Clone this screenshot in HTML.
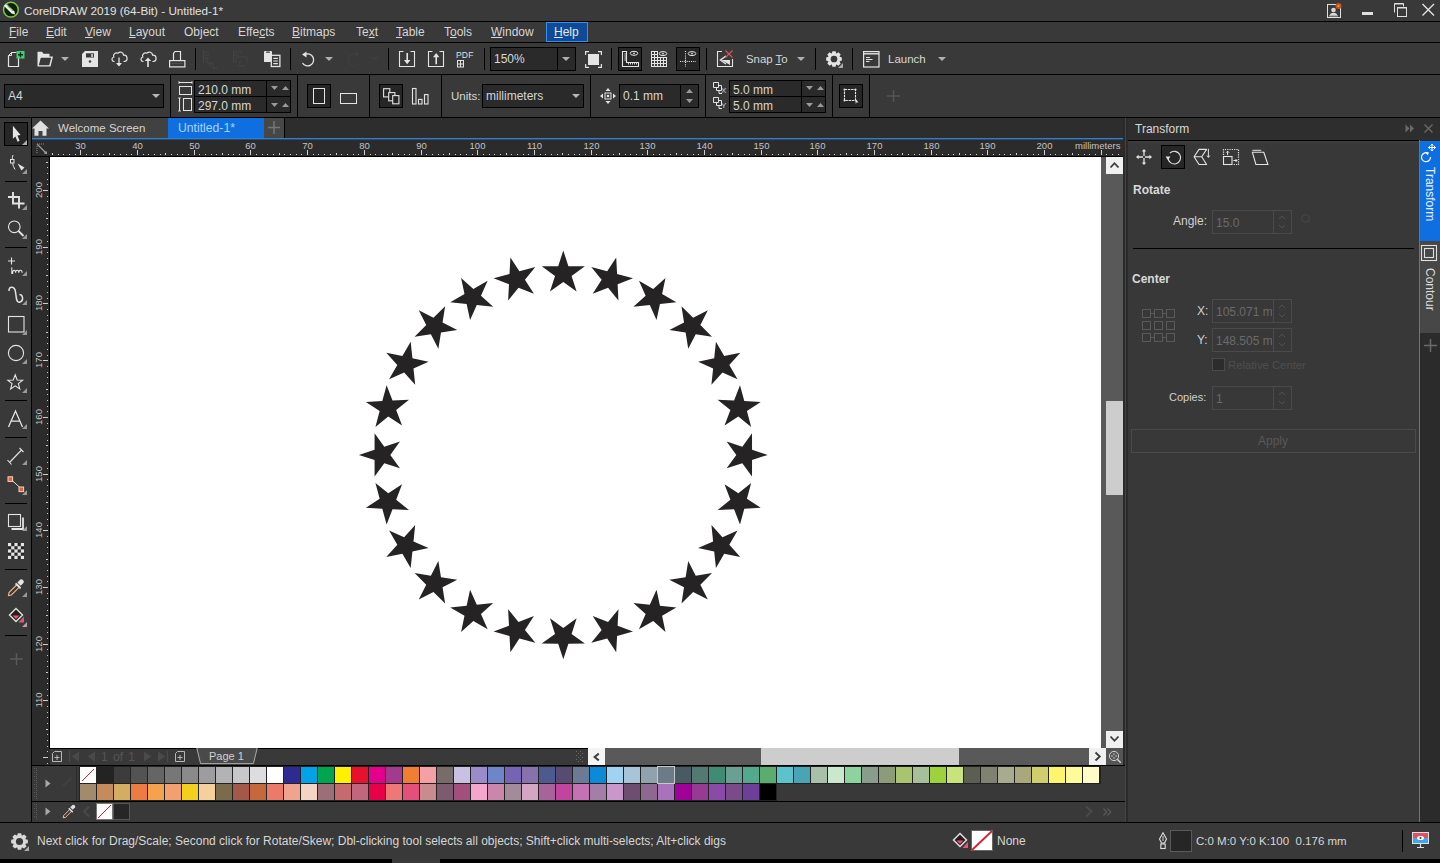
<!DOCTYPE html>
<html><head><meta charset="utf-8">
<style>
*{box-sizing:border-box}
html,body{margin:0;padding:0;width:1440px;height:863px;overflow:hidden;background:#393939;font-family:"Liberation Sans",sans-serif;color:#d6d6d6;font-size:12px}
.a{position:absolute}
.t{position:absolute;white-space:nowrap;line-height:14px}
u{text-decoration:underline;text-underline-offset:1px;text-decoration-thickness:1px}
svg{position:absolute;overflow:visible}
</style></head><body>
<div class="a" style="left:0px;top:0px;width:1440px;height:21px;background:#393939;"></div>
<div class="a" style="left:0px;top:21px;width:1440px;height:1px;background:#000000;"></div>
<svg style="left:2px;top:1px;" width="19" height="19" viewBox="0 0 19 19"><circle cx="8.9" cy="8.7" r="7.4" fill="#0c2406" stroke="#86bf4e" stroke-width="1.5"/>
<path d="M4.2 2.4 L1.8 4.8 L9.6 12.6 L13.2 13.6 L12.2 10.2 Z" fill="#e6f2de"/>
<path d="M4.4 3.6 L10.6 9.8" stroke="#203018" stroke-width="0.9" stroke-dasharray="1 0.9"/></svg>
<div class="t" style="left:24px;top:4px;color:#e2e2e2;font-size:11.7px">CorelDRAW 2019 (64-Bit) - Untitled-1*</div>
<svg style="left:1326px;top:2px;" width="18" height="17" viewBox="0 0 18 17"><rect x="1.5" y="2.5" width="13" height="13" fill="#393939" stroke="#e0e0e0" stroke-width="1"/>
<circle cx="7.5" cy="8" r="2.3" fill="#d8d8d8"/><path d="M3.5 14 Q4 10.8 7.5 10.8 Q11 10.8 11.5 14 Z" fill="#d8d8d8"/>
<rect x="3" y="13.2" width="9" height="1.3" fill="#9aa"/>
<circle cx="12.5" cy="4" r="3" fill="#c4541d"/><circle cx="12.5" cy="4" r="1" fill="#f0a060"/></svg>
<div class="a" style="left:1362px;top:12px;width:11px;height:3px;background:#e0e0e0;"></div>
<svg style="left:1394px;top:3px;" width="14" height="14" viewBox="0 0 14 14"><path d="M0.5 9.5 V0.5 H9.5 V3.5" fill="none" stroke="#e0e0e0" stroke-width="1"/>
<rect x="3.5" y="4.5" width="9" height="9" fill="#393939" stroke="#e0e0e0" stroke-width="1"/>
<path d="M0.5 1 H9.5 M3.5 5 H12.5" stroke="#e0e0e0" stroke-width="1"/></svg>
<svg style="left:1421px;top:3px;" width="15" height="13" viewBox="0 0 15 13"><path d="M1.5 1 L13 12.5 M13 1 L1.5 12.5" stroke="#e4e4e4" stroke-width="1.4"/></svg>
<div class="a" style="left:0px;top:42px;width:1440px;height:1px;background:#000000;"></div>
<div class="a" style="left:546px;top:22px;width:42px;height:20px;background:#0d4a98;border:1px solid #3f8ee6"></div>
<div class="t" style="left:9px;top:25px;"><u>F</u>ile</div>
<div class="t" style="left:46px;top:25px;"><u>E</u>dit</div>
<div class="t" style="left:85px;top:25px;"><u>V</u>iew</div>
<div class="t" style="left:129px;top:25px;"><u>L</u>ayout</div>
<div class="t" style="left:184px;top:25px;">Ob<u>j</u>ect</div>
<div class="t" style="left:238px;top:25px;">Effe<u>c</u>ts</div>
<div class="t" style="left:292px;top:25px;"><u>B</u>itmaps</div>
<div class="t" style="left:356px;top:25px;">Te<u>x</u>t</div>
<div class="t" style="left:396px;top:25px;"><u>T</u>able</div>
<div class="t" style="left:444px;top:25px;">T<u>o</u>ols</div>
<div class="t" style="left:491px;top:25px;"><u>W</u>indow</div>
<div class="t" style="left:554px;top:25px;color:#e8e8e8"><u>H</u>elp</div>
<div class="a" style="left:0px;top:74px;width:1440px;height:1px;background:#000000;"></div>
<svg style="left:8px;top:51px;" width="17" height="17" viewBox="0 0 17 17"><path d="M3.5 1.5 H8.5 M0.5 4.5 V15.5 H10.5 V7" fill="none" stroke="#e4e4e4" stroke-width="1.2"/>
<path d="M0.5 4.5 L3.5 1.5 V4.5 Z" fill="none" stroke="#e4e4e4" stroke-width="1"/>
<rect x="8.5" y="0" width="8" height="7.5" fill="#3dd07a"/>
<path d="M12.5 1.2 V6.3 M10 3.75 H15" stroke="#0a2a10" stroke-width="1.4"/></svg>
<svg style="left:37px;top:51px;" width="17" height="17" viewBox="0 0 17 17"><path d="M0.5 15.5 V0.8 H5 L6.5 2.8 H12.5 V5.5 H16 L13.5 15.5 Z" fill="#e4e4e4"/>
<path d="M3.8 6.8 H14.2 L12.2 14.2 H1.8 Z" fill="#393939"/></svg>
<svg style="left:61px;top:57px;" width="8" height="4" viewBox="0 0 8 4"><path d="M0 0 H8 L4.0 4 Z" fill="#b0b0b0"/></svg>
<svg style="left:82px;top:51px;" width="16" height="16" viewBox="0 0 16 16"><path d="M3 0 H16 V16 H0 V3 Z" fill="#e4e4e4"/>
<rect x="4" y="2.3" width="8" height="4.2" fill="#393939"/><rect x="9.3" y="3" width="1.5" height="3" fill="#e4e4e4"/>
<circle cx="8" cy="10.5" r="1.2" fill="#393939"/></svg>
<svg style="left:111px;top:51px;" width="16" height="16" viewBox="0 0 16 16"><path d="M3.5 10.5 H2.8 A2.3 2.3 0 0 1 2.8 6 A3 3 0 0 1 7 2.2 A3.2 3.2 0 0 1 12.6 4.2 A2.8 2.8 0 0 1 13.2 10.5 H12.5" fill="none" stroke="#e4e4e4" stroke-width="1.2"/>
<path d="M8 6.5 V14" stroke="#e4e4e4" stroke-width="1.3"/><path d="M5 12 L8 15.5 L11 12 Z" fill="#e4e4e4"/></svg>
<svg style="left:140px;top:51px;" width="16" height="16" viewBox="0 0 16 16"><path d="M3.5 10.5 H2.8 A2.3 2.3 0 0 1 2.8 6 A3 3 0 0 1 7 2.2 A3.2 3.2 0 0 1 12.6 4.2 A2.8 2.8 0 0 1 13.2 10.5 H12.5" fill="none" stroke="#e4e4e4" stroke-width="1.2"/>
<path d="M8 8.5 V16" stroke="#e4e4e4" stroke-width="1.6"/><path d="M4.8 10 L8 6.5 L11.2 10 Z" fill="#e4e4e4"/></svg>
<svg style="left:169px;top:51px;" width="17" height="17" viewBox="0 0 17 17"><path d="M4.5 9 V2.5 L6 0.5 H11.5 V9" fill="none" stroke="#e4e4e4" stroke-width="1.2"/>
<rect x="0.6" y="9.6" width="15.3" height="6.3" fill="none" stroke="#e4e4e4" stroke-width="1.2"/>
<path d="M2.5 12.6 H14" stroke="#555" stroke-width="0.8"/></svg>
<div class="a" style="left:195px;top:48px;width:1px;height:22px;background:#000;"></div>
<svg style="left:203px;top:49px;" width="21" height="20" viewBox="0 0 21 20"><path d="M0.5 1 V14 M0.5 3 H6 M0.5 6 H6 M0.5 9 H6 M4 8 V14 H10 V19 M7 14 V18 M9 19 H14" fill="none" stroke="#444" stroke-width="1"/></svg>
<svg style="left:233px;top:49px;" width="20" height="20" viewBox="0 0 20 20"><path d="M0.5 1 V14 M0.5 3 H9 M0.5 6 H6 M3 8 V14 M4 8 H14 V15 M7 11 V15 M5 17 H12" fill="none" stroke="#444" stroke-width="1"/></svg>
<svg style="left:263px;top:50px;" width="18" height="18" viewBox="0 0 18 18"><path d="M1 2 Q1 1 2 1 H8 Q9 1 9 2 V12 H1 Z" fill="#e4e4e4"/>
<rect x="3" y="1.5" width="4" height="1.3" rx="0.6" fill="#393939"/>
<rect x="8.3" y="5.3" width="8.6" height="11.2" fill="#393939" stroke="#e4e4e4" stroke-width="1.3"/>
<path d="M10.3 8.4 H14.9 M10.3 11 H14.9 M10.3 13.6 H14.9" stroke="#e4e4e4" stroke-width="1.2"/></svg>
<div class="a" style="left:290px;top:48px;width:1px;height:22px;background:#000;"></div>
<svg style="left:300px;top:51px;" width="17" height="17" viewBox="0 0 17 17"><path d="M5 3.5 A6 6 0 1 1 2.5 12" fill="none" stroke="#e4e4e4" stroke-width="1.3" stroke-dasharray="30 1.5 3 1.5 2"/>
<path d="M2 3.5 L6.5 0.5 V6.5 Z" fill="#e4e4e4"/></svg>
<svg style="left:325px;top:57px;" width="8" height="4" viewBox="0 0 8 4"><path d="M0 0 H8 L4.0 4 Z" fill="#b0b0b0"/></svg>
<svg style="left:345px;top:51px;" width="17" height="17" viewBox="0 0 17 17"><path d="M12 3.5 A6 6 0 1 0 14.5 12" fill="none" stroke="#3e3e3e" stroke-width="1.3"/>
<path d="M15 3.5 L10.5 0.5 V6.5 Z" fill="#3e3e3e"/></svg>
<svg style="left:370px;top:57px;" width="9" height="4" viewBox="0 0 9 4"><path d="M0 0 H9 L4.5 4 Z" fill="#3e3e3e"/></svg>
<div class="a" style="left:388px;top:48px;width:1px;height:22px;background:#000;"></div>
<svg style="left:398px;top:50px;" width="18" height="18" viewBox="0 0 18 18"><path d="M5.5 1.5 H1.5 V16.5 H16.5 V1.5 H12.5" fill="none" stroke="#e4e4e4" stroke-width="1.1"/>
<path d="M9.2 3 V11" stroke="#e4e4e4" stroke-width="1.6"/><path d="M6 10 H12.4 L9.2 14.3 Z" fill="#e4e4e4"/></svg>
<svg style="left:427px;top:50px;" width="18" height="18" viewBox="0 0 18 18"><path d="M5.5 1.5 H1.5 V16.5 H16.5 V1.5 H12.5" fill="none" stroke="#e4e4e4" stroke-width="1.1"/>
<path d="M9.2 6 V14.3" stroke="#e4e4e4" stroke-width="1.6"/><path d="M6 7.2 H12.4 L9.2 3 Z" fill="#e4e4e4"/></svg>
<div class="t" style="left:456px;top:51px;font-size:8.5px;line-height:8px;color:#e0e0e0;letter-spacing:0.2px">PDF</div>
<svg style="left:456px;top:60px;" width="9" height="8" viewBox="0 0 9 8"><rect x="1.5" y="0.5" width="6" height="6.5" fill="none" stroke="#e4e4e4" stroke-width="1"/>
<path d="M4.5 0.5 V7 M1.5 4 H7.5" stroke="#e4e4e4" stroke-width="1"/></svg>
<div class="a" style="left:484px;top:48px;width:1px;height:22px;background:#000;"></div>
<div class="a" style="left:490px;top:47px;width:86px;height:24px;background:#2a2a2a;border:1px solid #000"></div>
<div class="a" style="left:557px;top:48px;width:1px;height:22px;background:#000;"></div>
<div class="t" style="left:494px;top:52px;color:#d8d8d8">150%</div>
<svg style="left:562px;top:57px;" width="8" height="4" viewBox="0 0 8 4"><path d="M0 0 H8 L4.0 4 Z" fill="#b0b0b0"/></svg>
<svg style="left:585px;top:51px;" width="17" height="17" viewBox="0 0 17 17"><path d="M0.6 4 V0.6 H4 M13 0.6 H16.4 V4 M16.4 13 V16.4 H13 M4 16.4 H0.6 V13" fill="none" stroke="#e4e4e4" stroke-width="1.2"/>
<rect x="3" y="3" width="11" height="11" fill="#e4e4e4"/></svg>
<div class="a" style="left:611px;top:48px;width:1px;height:22px;background:#000;"></div>
<div class="a" style="left:618px;top:47px;width:24px;height:24px;background:#262626;border:1px solid #000"></div>
<svg style="left:622px;top:50px;" width="17" height="18" viewBox="0 0 17 18"><path d="M0.5 1.5 H4.5 V12.5 H16.5 V16.5 H0.5 Z" fill="none" stroke="#e4e4e4" stroke-width="1.1"/>
<path d="M2.3 4 H4.5 M2.3 6 H4.5 M2.3 8 H4.5 M2.3 10 H4.5 M6.5 12.5 V14.5 M8.5 12.5 V14.5 M10.5 12.5 V14.5 M12.5 12.5 V14.5 M14.5 12.5 V14.5" stroke="#e4e4e4" stroke-width="0.9"/>
<ellipse cx="12" cy="3.3" rx="3.8" ry="2" fill="none" stroke="#e4e4e4" stroke-width="1"/><circle cx="12" cy="3.3" r="0.9" fill="#e4e4e4"/></svg>
<svg style="left:651px;top:51px;" width="17" height="17" viewBox="0 0 17 17"><rect x="0" y="0" width="7" height="7" fill="#e4e4e4"/><rect x="0" y="6" width="16" height="10" fill="#e4e4e4"/><rect x="1" y="1" width="2" height="2" fill="#393939"/><rect x="4" y="1" width="2" height="2" fill="#393939"/><rect x="1" y="4" width="2" height="2" fill="#393939"/><rect x="4" y="4" width="2" height="2" fill="#393939"/><rect x="1" y="7" width="2" height="2" fill="#393939"/><rect x="4" y="7" width="2" height="2" fill="#393939"/><rect x="7" y="7" width="2" height="2" fill="#393939"/><rect x="10" y="7" width="2" height="2" fill="#393939"/><rect x="13" y="7" width="2" height="2" fill="#393939"/><rect x="1" y="10" width="2" height="2" fill="#393939"/><rect x="4" y="10" width="2" height="2" fill="#393939"/><rect x="7" y="10" width="2" height="2" fill="#393939"/><rect x="10" y="10" width="2" height="2" fill="#393939"/><rect x="13" y="10" width="2" height="2" fill="#393939"/><rect x="1" y="13" width="2" height="2" fill="#393939"/><rect x="4" y="13" width="2" height="2" fill="#393939"/><rect x="7" y="13" width="2" height="2" fill="#393939"/><rect x="10" y="13" width="2" height="2" fill="#393939"/><rect x="13" y="13" width="2" height="2" fill="#393939"/>
<ellipse cx="12" cy="2.6" rx="3.8" ry="2" fill="#393939" stroke="#e4e4e4" stroke-width="1"/><circle cx="12" cy="2.6" r="0.9" fill="#e4e4e4"/></svg>
<div class="a" style="left:676px;top:47px;width:24px;height:24px;background:#262626;border:1px solid #000"></div>
<svg style="left:679px;top:50px;" width="18" height="18" viewBox="0 0 18 18"><path d="M6.5 1 V17 M1 11.5 H17" fill="none" stroke="#e4e4e4" stroke-width="1.1" stroke-dasharray="1.1 1.1"/>
<ellipse cx="13" cy="3.6" rx="3.8" ry="2" fill="none" stroke="#e4e4e4" stroke-width="1"/><circle cx="13" cy="3.6" r="0.9" fill="#e4e4e4"/></svg>
<div class="a" style="left:706px;top:48px;width:1px;height:22px;background:#000;"></div>
<svg style="left:716px;top:49px;" width="19" height="19" viewBox="0 0 19 19"><path d="M6 2.5 H1.5 V17.5 H16.5 V10" fill="none" stroke="#e4e4e4" stroke-width="1.1"/>
<path d="M10 7 L4.5 11 L10 15" fill="none" stroke="#e4e4e4" stroke-width="1.5"/><path d="M5.5 11 H14 V16 Z" fill="#e4e4e4"/>
<path d="M9.5 1.5 L16.5 8.5 M16.5 1.5 L9.5 8.5" stroke="#d25462" stroke-width="1.2"/></svg>
<div class="t" style="left:746px;top:52px;color:#d8d8d8;font-size:11.4px">Snap <u>T</u>o</div>
<svg style="left:797px;top:57px;" width="8" height="4" viewBox="0 0 8 4"><path d="M0 0 H8 L4.0 4 Z" fill="#b0b0b0"/></svg>
<div class="a" style="left:815px;top:48px;width:1px;height:22px;background:#000;"></div>
<svg style="left:826px;top:51px;" width="16" height="16" viewBox="0 0 16 16"><path d="M15.84 6.41 L15.84 9.59 L13.69 10.14 L13.54 10.51 L14.67 12.42 L12.42 14.67 L10.51 13.54 L10.14 13.69 L9.59 15.84 L6.41 15.84 L5.86 13.69 L5.49 13.54 L3.58 14.67 L1.33 12.42 L2.46 10.51 L2.31 10.14 L0.16 9.59 L0.16 6.41 L2.31 5.86 L2.46 5.49 L1.33 3.58 L3.58 1.33 L5.49 2.46 L5.86 2.31 L6.41 0.16 L9.59 0.16 L10.14 2.31 L10.51 2.46 L12.42 1.33 L14.67 3.58 L13.54 5.49 L13.69 5.86 Z" fill="#e4e4e4"/><circle cx="8.0" cy="8.0" r="3.36" fill="#393939"/></svg>
<svg style="left:838px;top:63px;" width="5" height="5" viewBox="0 0 5 5"><path d="M5 0 V5 H0 Z" fill="#aaa"/></svg>
<div class="a" style="left:852px;top:48px;width:1px;height:22px;background:#000;"></div>
<svg style="left:863px;top:51px;" width="17" height="17" viewBox="0 0 17 17"><rect x="0.6" y="0.6" width="15.4" height="15.4" fill="none" stroke="#e4e4e4" stroke-width="1.2"/>
<path d="M0.6 2.8 H16" stroke="#e4e4e4" stroke-width="1.4"/>
<path d="M3 6.5 H7 M3 8.5 H9.5 M3 10.5 H6.5" stroke="#e4e4e4" stroke-width="1"/></svg>
<div class="t" style="left:888px;top:52px;color:#d8d8d8;font-size:11.5px">Launch</div>
<svg style="left:938px;top:57px;" width="8" height="4" viewBox="0 0 8 4"><path d="M0 0 H8 L4.0 4 Z" fill="#b0b0b0"/></svg>
<div class="a" style="left:0px;top:117px;width:1440px;height:1px;background:#000000;"></div>
<div class="a" style="left:4px;top:84px;width:160px;height:24px;background:#2a2a2a;border:1px solid #000"></div>
<div class="t" style="left:8px;top:89px;">A4</div>
<svg style="left:152px;top:94px;" width="8" height="4" viewBox="0 0 8 4"><path d="M0 0 H8 L4.0 4 Z" fill="#b8b8b8"/></svg>
<div class="a" style="left:170px;top:75px;width:1px;height:42px;background:#000;"></div>
<svg style="left:178px;top:81px;" width="15" height="31" viewBox="0 0 15 31"><path d="M1 1.5 H14" stroke="#e4e4e4" stroke-width="1"/><path d="M1 0 V3 M14 0 V3" stroke="#e4e4e4" stroke-width="0.8"/>
<rect x="1.5" y="5.5" width="12" height="8" fill="none" stroke="#e4e4e4" stroke-width="1"/>
<path d="M1.5 17 V30" stroke="#e4e4e4" stroke-width="1"/><path d="M0 17 H3 M0 30 H3" stroke="#e4e4e4" stroke-width="0.8"/>
<rect x="5.5" y="17.5" width="8" height="12" fill="none" stroke="#e4e4e4" stroke-width="1"/></svg>
<div class="a" style="left:194px;top:80px;width:97px;height:33px;background:#2a2a2a;border:1px solid #000"></div>
<div class="a" style="left:194px;top:96px;width:97px;height:1px;background:#000;"></div>
<div class="a" style="left:266px;top:80px;width:1px;height:33px;background:#000;"></div>
<div class="t" style="left:198px;top:83px;">210.0 mm</div>
<div class="t" style="left:198px;top:99px;">297.0 mm</div>
<svg style="left:271px;top:86px;" width="7" height="4" viewBox="0 0 7 4"><path d="M0 0 H7 L3.5 4 Z" fill="#9a9a9a"/></svg>
<svg style="left:282px;top:86px;" width="7" height="4" viewBox="0 0 7 4"><path d="M0 4 H7 L3.5 0 Z" fill="#9a9a9a"/></svg>
<svg style="left:271px;top:103px;" width="7" height="4" viewBox="0 0 7 4"><path d="M0 0 H7 L3.5 4 Z" fill="#9a9a9a"/></svg>
<svg style="left:282px;top:103px;" width="7" height="4" viewBox="0 0 7 4"><path d="M0 4 H7 L3.5 0 Z" fill="#9a9a9a"/></svg>
<div class="a" style="left:297px;top:75px;width:1px;height:42px;background:#000;"></div>
<div class="a" style="left:307px;top:84px;width:24px;height:24px;background:#262626;border:1px solid #000"></div>
<svg style="left:313px;top:88px;" width="12" height="16" viewBox="0 0 12 16"><rect x="0.5" y="0.5" width="11" height="15" fill="none" stroke="#e4e4e4" stroke-width="1"/></svg>
<svg style="left:340px;top:93px;" width="17" height="11" viewBox="0 0 17 11"><rect x="0.5" y="0.5" width="16" height="10" fill="none" stroke="#e4e4e4" stroke-width="1"/></svg>
<div class="a" style="left:369px;top:75px;width:1px;height:42px;background:#000;"></div>
<div class="a" style="left:379px;top:84px;width:24px;height:24px;background:#262626;border:1px solid #000"></div>
<svg style="left:382px;top:87px;" width="18" height="18" viewBox="0 0 18 18"><rect x="1.6" y="1.7" width="6.2" height="8.2" fill="#262626" stroke="#e4e4e4" stroke-width="1.1"/>
<rect x="6.7" y="5.6" width="6.2" height="8.2" fill="#262626" stroke="#e4e4e4" stroke-width="1.1"/>
<rect x="10.7" y="8.6" width="6.2" height="8.2" fill="#262626" stroke="#e4e4e4" stroke-width="1.1"/></svg>
<svg style="left:411px;top:87px;" width="18" height="18" viewBox="0 0 18 18"><rect x="1.5" y="1.5" width="3.5" height="15.5" fill="none" stroke="#e4e4e4" stroke-width="1.1"/>
<rect x="7.5" y="12.4" width="3.5" height="4.6" fill="none" stroke="#e4e4e4" stroke-width="1.1"/>
<rect x="13.5" y="7.6" width="3.5" height="9.4" fill="none" stroke="#e4e4e4" stroke-width="1.1"/></svg>
<div class="a" style="left:441px;top:75px;width:1px;height:42px;background:#000;"></div>
<div class="t" style="left:451px;top:89px;font-size:11.5px">Units:</div>
<div class="a" style="left:482px;top:84px;width:102px;height:24px;background:#2a2a2a;border:1px solid #000"></div>
<div class="t" style="left:486px;top:89px;">millimeters</div>
<svg style="left:572px;top:94px;" width="8" height="4" viewBox="0 0 8 4"><path d="M0 0 H8 L4.0 4 Z" fill="#b8b8b8"/></svg>
<div class="a" style="left:590px;top:75px;width:1px;height:42px;background:#000;"></div>
<svg style="left:600px;top:88px;" width="16" height="16" viewBox="0 0 16 16"><path d="M8 0 L10.5 3 H5.5 Z M8 16 L10.5 13 H5.5 Z M0 8 L3 5.5 V10.5 Z M16 8 L13 5.5 V10.5 Z" fill="#e4e4e4"/>
<rect x="5" y="5" width="6" height="6" fill="none" stroke="#e4e4e4" stroke-width="1"/><rect x="6.8" y="6.8" width="2.4" height="2.4" fill="#e4e4e4"/></svg>
<div class="a" style="left:619px;top:84px;width:80px;height:24px;background:#2a2a2a;border:1px solid #000"></div>
<div class="a" style="left:680px;top:85px;width:1px;height:22px;background:#000;"></div>
<div class="t" style="left:623px;top:89px;">0.1 mm</div>
<svg style="left:686px;top:89px;" width="7" height="4" viewBox="0 0 7 4"><path d="M0 4 H7 L3.5 0 Z" fill="#9a9a9a"/></svg>
<svg style="left:686px;top:99px;" width="7" height="4" viewBox="0 0 7 4"><path d="M0 0 H7 L3.5 4 Z" fill="#9a9a9a"/></svg>
<div class="a" style="left:705px;top:75px;width:1px;height:42px;background:#000;"></div>
<svg style="left:713px;top:82px;" width="16" height="15" viewBox="0 0 16 15"><path d="M0.5 0.5 H5.5 V5.5 H0.5 Z M5.5 3.5 H8.5 V8.5 H3.5 V5.5 M6 8.5 V11.5 H9" fill="none" stroke="#e4e4e4" stroke-width="1"/></svg>
<div class="t" style="left:721px;top:86px;font-size:8px;line-height:10px;color:#d0d0d0">X</div>
<svg style="left:713px;top:97px;" width="16" height="15" viewBox="0 0 16 15"><path d="M0.5 0.5 H5.5 V5.5 H0.5 Z M5.5 3.5 H8.5 V8.5 H3.5 V5.5 M6 8.5 V11.5 H9" fill="none" stroke="#e4e4e4" stroke-width="1"/></svg>
<div class="t" style="left:721px;top:101px;font-size:8px;line-height:10px;color:#d0d0d0">Y</div>
<div class="a" style="left:729px;top:80px;width:97px;height:33px;background:#2a2a2a;border:1px solid #000"></div>
<div class="a" style="left:729px;top:96px;width:97px;height:1px;background:#000;"></div>
<div class="a" style="left:801px;top:80px;width:1px;height:33px;background:#000;"></div>
<div class="t" style="left:733px;top:83px;">5.0 mm</div>
<div class="t" style="left:733px;top:99px;">5.0 mm</div>
<svg style="left:806px;top:86px;" width="7" height="4" viewBox="0 0 7 4"><path d="M0 0 H7 L3.5 4 Z" fill="#9a9a9a"/></svg>
<svg style="left:817px;top:86px;" width="7" height="4" viewBox="0 0 7 4"><path d="M0 4 H7 L3.5 0 Z" fill="#9a9a9a"/></svg>
<svg style="left:806px;top:103px;" width="7" height="4" viewBox="0 0 7 4"><path d="M0 0 H7 L3.5 4 Z" fill="#9a9a9a"/></svg>
<svg style="left:817px;top:103px;" width="7" height="4" viewBox="0 0 7 4"><path d="M0 4 H7 L3.5 0 Z" fill="#9a9a9a"/></svg>
<div class="a" style="left:832px;top:75px;width:1px;height:42px;background:#000;"></div>
<div class="a" style="left:839px;top:84px;width:24px;height:24px;background:#262626;border:1px solid #000"></div>
<svg style="left:843px;top:88px;" width="17" height="17" viewBox="0 0 17 17"><path d="M1.5 1.5 H12.5 V12.5 H1.5 Z" fill="none" stroke="#e4e4e4" stroke-width="1.1" stroke-dasharray="2.5 0.8"/>
<circle cx="1.5" cy="1.5" r="1" fill="#e4e4e4"/><circle cx="12.5" cy="1.5" r="1" fill="#e4e4e4"/><circle cx="1.5" cy="12.5" r="1" fill="#e4e4e4"/>
<path d="M12 10 L15.5 14.5 L13.6 14.2 L12.8 16 Z" fill="#e4e4e4"/></svg>
<div class="a" style="left:869px;top:75px;width:1px;height:42px;background:#000;"></div>
<svg style="left:887px;top:90px;" width="13" height="12" viewBox="0 0 13 12"><path d="M6.5 0 V12 M0 6 H13" stroke="#555" stroke-width="1.6"/></svg>
<div class="a" style="left:31px;top:118px;width:1px;height:704px;background:#000;"></div>
<div class="a" style="left:4px;top:122px;width:24px;height:24px;background:#262626;border:1px solid #000"></div>
<svg style="left:11px;top:124px;" width="12" height="19" viewBox="0 0 12 19"><path d="M1.9 1.7 L9.6 11 L6.4 11.4 L8.6 16.8 L6.6 17.8 L4.4 12.6 L1.9 14.8 Z" fill="#e4e4e4"/></svg>
<svg style="left:22px;top:140px;" width="5" height="5" viewBox="0 0 5 5"><path d="M5 0 V5 H0 Z" fill="#b0b0b0"/></svg>
<svg style="left:8px;top:154px;" width="20" height="20" viewBox="0 0 20 20"><path d="M5 1 Q4 4 4.2 6.3 M4.5 8.8 Q5 12.5 7 15.5" fill="none" stroke="#e4e4e4" stroke-width="1"/>
<rect x="2.5" y="5.5" width="3.5" height="3.5" fill="#393939" stroke="#e4e4e4" stroke-width="1"/>
<path d="M9.5 9.5 L16.5 13.5 L13.5 16.5 Z" fill="#e4e4e4"/></svg>
<svg style="left:22px;top:169px;" width="5" height="5" viewBox="0 0 5 5"><path d="M5 0 V5 H0 Z" fill="#9a9a9a"/></svg>
<div class="a" style="left:5px;top:181px;width:22px;height:1px;background:#000;"></div>
<svg style="left:7px;top:191px;" width="18" height="18" viewBox="0 0 18 18"><path d="M6 1 V12.5 H17.5 M1 6 H12 V17.5" fill="none" stroke="#e4e4e4" stroke-width="1.9"/></svg>
<svg style="left:22px;top:205px;" width="5" height="5" viewBox="0 0 5 5"><path d="M5 0 V5 H0 Z" fill="#9a9a9a"/></svg>
<svg style="left:7px;top:220px;" width="18" height="18" viewBox="0 0 18 18"><circle cx="7.3" cy="6.8" r="5.8" fill="none" stroke="#e4e4e4" stroke-width="1.1"/>
<path d="M11.5 11 L16.5 16" stroke="#e4e4e4" stroke-width="1.8"/></svg>
<svg style="left:22px;top:234px;" width="5" height="5" viewBox="0 0 5 5"><path d="M5 0 V5 H0 Z" fill="#9a9a9a"/></svg>
<div class="a" style="left:5px;top:247px;width:22px;height:1px;background:#000;"></div>
<svg style="left:7px;top:257px;" width="20" height="19" viewBox="0 0 20 19"><path d="M4.5 0.5 V7.5 M1 4 H8" stroke="#e4e4e4" stroke-width="1.1"/>
<path d="M4.8 10.2 V16.5 H5.6 C5.6 12.4 8.6 12.4 8.6 15.8 C8.6 12.4 11.8 12.4 11.8 15.8 C11.8 12.4 15 12.4 15.2 15.8" fill="none" stroke="#e4e4e4" stroke-width="1.05"/></svg>
<svg style="left:22px;top:271px;" width="5" height="5" viewBox="0 0 5 5"><path d="M5 0 V5 H0 Z" fill="#9a9a9a"/></svg>
<svg style="left:7px;top:286px;" width="18" height="19" viewBox="0 0 18 19"><path d="M2 5 Q2 1 5 1.3 Q8 1.7 8.5 6 Q9.2 11 9.5 13 Q10.5 17 13 16 Q16 15 15.5 11.5 Q15 8.5 12.5 8.5" fill="none" stroke="#e4e4e4" stroke-width="1.5"/></svg>
<svg style="left:22px;top:300px;" width="5" height="5" viewBox="0 0 5 5"><path d="M5 0 V5 H0 Z" fill="#9a9a9a"/></svg>
<svg style="left:7px;top:315px;" width="18" height="18" viewBox="0 0 18 18"><rect x="1.5" y="1.5" width="15.5" height="15.5" fill="none" stroke="#e4e4e4" stroke-width="1.1"/></svg>
<svg style="left:22px;top:330px;" width="5" height="5" viewBox="0 0 5 5"><path d="M5 0 V5 H0 Z" fill="#9a9a9a"/></svg>
<svg style="left:7px;top:344px;" width="18" height="18" viewBox="0 0 18 18"><circle cx="9" cy="9" r="7.6" fill="none" stroke="#e4e4e4" stroke-width="1.1"/></svg>
<svg style="left:22px;top:359px;" width="5" height="5" viewBox="0 0 5 5"><path d="M5 0 V5 H0 Z" fill="#9a9a9a"/></svg>
<svg style="left:7px;top:374px;" width="18" height="18" viewBox="0 0 18 18"><polygon points="8.20,0.80 10.14,5.93 15.62,6.19 11.34,9.62 12.78,14.91 8.20,11.90 3.62,14.91 5.06,9.62 0.78,6.19 6.26,5.93" fill="none" stroke="#e4e4e4" stroke-width="1.1"/></svg>
<svg style="left:22px;top:388px;" width="5" height="5" viewBox="0 0 5 5"><path d="M5 0 V5 H0 Z" fill="#9a9a9a"/></svg>
<div class="a" style="left:5px;top:400px;width:22px;height:1px;background:#000;"></div>
<svg style="left:7px;top:410px;" width="18" height="18" viewBox="0 0 18 18"><path d="M1.5 17 L8.5 1 L15.5 17 M4.3 11.2 H12.7" fill="none" stroke="#e4e4e4" stroke-width="1.3"/></svg>
<svg style="left:22px;top:424px;" width="5" height="5" viewBox="0 0 5 5"><path d="M5 0 V5 H0 Z" fill="#9a9a9a"/></svg>
<div class="a" style="left:5px;top:437px;width:22px;height:1px;background:#000;"></div>
<svg style="left:7px;top:447px;" width="18" height="18" viewBox="0 0 18 18"><path d="M2.5 15.5 L14.5 3 M0.5 13 L4.5 17.5 M12.5 1 L16.5 5" fill="none" stroke="#e4e4e4" stroke-width="1.1"/></svg>
<svg style="left:22px;top:460px;" width="5" height="5" viewBox="0 0 5 5"><path d="M5 0 V5 H0 Z" fill="#9a9a9a"/></svg>
<svg style="left:7px;top:475px;" width="18" height="18" viewBox="0 0 18 18"><path d="M3.5 4 L14.5 14" stroke="#e4e4e4" stroke-width="1"/>
<rect x="1" y="1.8" width="4.6" height="4.6" fill="#e0643e" stroke="#f4d0c0" stroke-width="1"/>
<rect x="12" y="12" width="4.6" height="4.6" fill="#e0643e" stroke="#f4d0c0" stroke-width="1"/></svg>
<svg style="left:22px;top:490px;" width="5" height="5" viewBox="0 0 5 5"><path d="M5 0 V5 H0 Z" fill="#9a9a9a"/></svg>
<div class="a" style="left:5px;top:503px;width:22px;height:1px;background:#000;"></div>
<svg style="left:7px;top:513px;" width="18" height="18" viewBox="0 0 18 18"><rect x="1.5" y="1.5" width="12" height="12" fill="none" stroke="#e4e4e4" stroke-width="1.1"/>
<path d="M4.5 16 H16 V4.5" fill="none" stroke="#e4e4e4" stroke-width="1.8"/></svg>
<svg style="left:22px;top:526px;" width="5" height="5" viewBox="0 0 5 5"><path d="M5 0 V5 H0 Z" fill="#9a9a9a"/></svg>
<svg style="left:7px;top:542px;" width="18" height="18" viewBox="0 0 18 18"><rect x="1" y="1" width="16" height="16" fill="#e4e4e4"/><rect x="1.0" y="4.2" width="3.2" height="3.2" fill="#262626"/><rect x="1.0" y="10.6" width="3.2" height="3.2" fill="#262626"/><rect x="4.2" y="1.0" width="3.2" height="3.2" fill="#262626"/><rect x="4.2" y="7.4" width="3.2" height="3.2" fill="#262626"/><rect x="4.2" y="13.8" width="3.2" height="3.2" fill="#262626"/><rect x="7.4" y="4.2" width="3.2" height="3.2" fill="#262626"/><rect x="7.4" y="10.6" width="3.2" height="3.2" fill="#262626"/><rect x="10.6" y="1.0" width="3.2" height="3.2" fill="#262626"/><rect x="10.6" y="7.4" width="3.2" height="3.2" fill="#262626"/><rect x="10.6" y="13.8" width="3.2" height="3.2" fill="#262626"/><rect x="13.8" y="4.2" width="3.2" height="3.2" fill="#262626"/><rect x="13.8" y="10.6" width="3.2" height="3.2" fill="#262626"/></svg>
<div class="a" style="left:5px;top:569px;width:22px;height:1px;background:#000;"></div>
<svg style="left:7px;top:579px;" width="18" height="18" viewBox="0 0 18 18"><path d="M1.5 16.5 L2 13.6 L10.2 5.4 L12.6 7.8 L4.4 16 Z" fill="#393939" stroke="#f0b898" stroke-width="1.1"/>
<path d="M10.4 3.4 L13.3 0.5 Q14.6 -0.3 16 1.1 Q17.4 2.5 16.6 3.8 L13.7 6.7 Z" fill="#e4e4e4"/><path d="M8.6 4.4 L13.6 9.4" stroke="#e4e4e4" stroke-width="1.8"/></svg>
<svg style="left:22px;top:592px;" width="5" height="5" viewBox="0 0 5 5"><path d="M5 0 V5 H0 Z" fill="#9a9a9a"/></svg>
<svg style="left:7px;top:607px;" width="18" height="18" viewBox="0 0 18 18"><path d="M9 1.5 L15.5 8 L9 14.5 L2.5 8 Z" fill="#2a1a1e" stroke="#d8e8d8" stroke-width="1.4"/>
<path d="M5.5 8.5 H12.5 L9 12 Z" fill="#e8557a"/>
<path d="M17 9.5 V15.5 H11.5 Z" fill="#e8557a"/></svg>
<svg style="left:22px;top:622px;" width="5" height="5" viewBox="0 0 5 5"><path d="M5 0 V5 H0 Z" fill="#c0a0a8"/></svg>
<div class="a" style="left:5px;top:635px;width:22px;height:1px;background:#000;"></div>
<svg style="left:10px;top:653px;" width="13" height="12" viewBox="0 0 13 12"><path d="M6.5 0 V12 M0 6 H13" stroke="#5a5a5a" stroke-width="1.4"/></svg>
<div class="a" style="left:32px;top:118px;width:1093px;height:20px;background:#2d2d2d;"></div>
<div class="a" style="left:32px;top:118px;width:136px;height:20px;background:#414141;"></div>
<svg style="left:32px;top:120px;" width="18" height="16" viewBox="0 0 18 16"><path d="M8.5 0.5 L17 8.5 H14.5 V15.8 H10.5 V11 H6.5 V15.8 H2.5 V8.5 H0 Z" fill="#e0e0e0"/></svg>
<div class="t" style="left:58px;top:121px;font-size:11.5px;color:#d4d4d4">Welcome Screen</div>
<div class="a" style="left:168px;top:118px;width:96px;height:20px;background:#0f6fe0;"></div>
<div class="t" style="left:178px;top:121px;font-size:12.2px;color:#a9d2ff">Untitled-1*</div>
<div class="a" style="left:264px;top:118px;width:20px;height:20px;background:#474747;"></div>
<svg style="left:268px;top:121px;" width="12" height="13" viewBox="0 0 12 13"><path d="M6 0 V13 M0 6.5 H12" stroke="#767676" stroke-width="1.5"/></svg>
<div class="a" style="left:284px;top:118px;width:1px;height:20px;background:#000;"></div>
<div class="a" style="left:32px;top:138px;width:1092px;height:1px;background:#3a7bc2;"></div>
<div class="a" style="left:32px;top:139px;width:1092px;height:1px;background:#1f4e80;"></div>
<div class="a" style="left:32px;top:140px;width:1092px;height:16px;background:#2b2b2b;"></div>
<div class="a" style="left:32px;top:156px;width:1092px;height:1px;background:#000;"></div>
<div class="a" style="left:32px;top:157px;width:18px;height:608px;background:#2b2b2b;"></div>
<div class="a" style="left:49px;top:157px;width:1px;height:592px;background:#000;"></div>
<svg style="left:36px;top:143px;" width="12" height="12" viewBox="0 0 12 12"><path d="M1 1 L10 10" stroke="#9a9a9a" stroke-width="1.2"/><path d="M1 3 V11 M1 1 H9" stroke="#8a8a8a" stroke-width="1" stroke-dasharray="1 1"/>
<rect x="8.5" y="8.5" width="2.5" height="2.5" fill="#9a9a9a"/></svg>
<svg style="left:0;top:0" width="1440" height="863"><g fill="#cfcfcf"><rect x="52" y="153" width="1" height="2"/><rect x="58" y="154" width="1" height="1"/><rect x="63" y="154" width="1" height="1"/><rect x="69" y="154" width="1" height="1"/><rect x="75" y="154" width="1" height="1"/><rect x="80" y="150" width="1" height="5"/><rect x="86" y="154" width="1" height="1"/><rect x="92" y="154" width="1" height="1"/><rect x="97" y="154" width="1" height="1"/><rect x="103" y="154" width="1" height="1"/><rect x="109" y="153" width="1" height="2"/><rect x="114" y="154" width="1" height="1"/><rect x="120" y="154" width="1" height="1"/><rect x="126" y="154" width="1" height="1"/><rect x="131" y="154" width="1" height="1"/><rect x="137" y="150" width="1" height="5"/><rect x="143" y="154" width="1" height="1"/><rect x="148" y="154" width="1" height="1"/><rect x="154" y="154" width="1" height="1"/><rect x="160" y="154" width="1" height="1"/><rect x="165" y="153" width="1" height="2"/><rect x="171" y="154" width="1" height="1"/><rect x="177" y="154" width="1" height="1"/><rect x="182" y="154" width="1" height="1"/><rect x="188" y="154" width="1" height="1"/><rect x="194" y="150" width="1" height="5"/><rect x="199" y="154" width="1" height="1"/><rect x="205" y="154" width="1" height="1"/><rect x="211" y="154" width="1" height="1"/><rect x="216" y="154" width="1" height="1"/><rect x="222" y="153" width="1" height="2"/><rect x="228" y="154" width="1" height="1"/><rect x="233" y="154" width="1" height="1"/><rect x="239" y="154" width="1" height="1"/><rect x="245" y="154" width="1" height="1"/><rect x="250" y="150" width="1" height="5"/><rect x="256" y="154" width="1" height="1"/><rect x="262" y="154" width="1" height="1"/><rect x="267" y="154" width="1" height="1"/><rect x="273" y="154" width="1" height="1"/><rect x="279" y="153" width="1" height="2"/><rect x="284" y="154" width="1" height="1"/><rect x="290" y="154" width="1" height="1"/><rect x="296" y="154" width="1" height="1"/><rect x="301" y="154" width="1" height="1"/><rect x="307" y="150" width="1" height="5"/><rect x="313" y="154" width="1" height="1"/><rect x="318" y="154" width="1" height="1"/><rect x="324" y="154" width="1" height="1"/><rect x="330" y="154" width="1" height="1"/><rect x="336" y="153" width="1" height="2"/><rect x="341" y="154" width="1" height="1"/><rect x="347" y="154" width="1" height="1"/><rect x="353" y="154" width="1" height="1"/><rect x="358" y="154" width="1" height="1"/><rect x="364" y="150" width="1" height="5"/><rect x="370" y="154" width="1" height="1"/><rect x="375" y="154" width="1" height="1"/><rect x="381" y="154" width="1" height="1"/><rect x="387" y="154" width="1" height="1"/><rect x="392" y="153" width="1" height="2"/><rect x="398" y="154" width="1" height="1"/><rect x="404" y="154" width="1" height="1"/><rect x="409" y="154" width="1" height="1"/><rect x="415" y="154" width="1" height="1"/><rect x="421" y="150" width="1" height="5"/><rect x="426" y="154" width="1" height="1"/><rect x="432" y="154" width="1" height="1"/><rect x="438" y="154" width="1" height="1"/><rect x="443" y="154" width="1" height="1"/><rect x="449" y="153" width="1" height="2"/><rect x="455" y="154" width="1" height="1"/><rect x="460" y="154" width="1" height="1"/><rect x="466" y="154" width="1" height="1"/><rect x="472" y="154" width="1" height="1"/><rect x="477" y="150" width="1" height="5"/><rect x="483" y="154" width="1" height="1"/><rect x="489" y="154" width="1" height="1"/><rect x="494" y="154" width="1" height="1"/><rect x="500" y="154" width="1" height="1"/><rect x="506" y="153" width="1" height="2"/><rect x="511" y="154" width="1" height="1"/><rect x="517" y="154" width="1" height="1"/><rect x="523" y="154" width="1" height="1"/><rect x="528" y="154" width="1" height="1"/><rect x="534" y="150" width="1" height="5"/><rect x="540" y="154" width="1" height="1"/><rect x="545" y="154" width="1" height="1"/><rect x="551" y="154" width="1" height="1"/><rect x="557" y="154" width="1" height="1"/><rect x="562" y="153" width="1" height="2"/><rect x="568" y="154" width="1" height="1"/><rect x="574" y="154" width="1" height="1"/><rect x="579" y="154" width="1" height="1"/><rect x="585" y="154" width="1" height="1"/><rect x="591" y="150" width="1" height="5"/><rect x="596" y="154" width="1" height="1"/><rect x="602" y="154" width="1" height="1"/><rect x="608" y="154" width="1" height="1"/><rect x="613" y="154" width="1" height="1"/><rect x="619" y="153" width="1" height="2"/><rect x="625" y="154" width="1" height="1"/><rect x="630" y="154" width="1" height="1"/><rect x="636" y="154" width="1" height="1"/><rect x="642" y="154" width="1" height="1"/><rect x="647" y="150" width="1" height="5"/><rect x="653" y="154" width="1" height="1"/><rect x="659" y="154" width="1" height="1"/><rect x="664" y="154" width="1" height="1"/><rect x="670" y="154" width="1" height="1"/><rect x="676" y="153" width="1" height="2"/><rect x="681" y="154" width="1" height="1"/><rect x="687" y="154" width="1" height="1"/><rect x="693" y="154" width="1" height="1"/><rect x="698" y="154" width="1" height="1"/><rect x="704" y="150" width="1" height="5"/><rect x="710" y="154" width="1" height="1"/><rect x="715" y="154" width="1" height="1"/><rect x="721" y="154" width="1" height="1"/><rect x="727" y="154" width="1" height="1"/><rect x="732" y="153" width="1" height="2"/><rect x="738" y="154" width="1" height="1"/><rect x="744" y="154" width="1" height="1"/><rect x="749" y="154" width="1" height="1"/><rect x="755" y="154" width="1" height="1"/><rect x="761" y="150" width="1" height="5"/><rect x="766" y="154" width="1" height="1"/><rect x="772" y="154" width="1" height="1"/><rect x="778" y="154" width="1" height="1"/><rect x="783" y="154" width="1" height="1"/><rect x="789" y="153" width="1" height="2"/><rect x="795" y="154" width="1" height="1"/><rect x="800" y="154" width="1" height="1"/><rect x="806" y="154" width="1" height="1"/><rect x="812" y="154" width="1" height="1"/><rect x="817" y="150" width="1" height="5"/><rect x="823" y="154" width="1" height="1"/><rect x="829" y="154" width="1" height="1"/><rect x="834" y="154" width="1" height="1"/><rect x="840" y="154" width="1" height="1"/><rect x="846" y="153" width="1" height="2"/><rect x="851" y="154" width="1" height="1"/><rect x="857" y="154" width="1" height="1"/><rect x="863" y="154" width="1" height="1"/><rect x="868" y="154" width="1" height="1"/><rect x="874" y="150" width="1" height="5"/><rect x="880" y="154" width="1" height="1"/><rect x="885" y="154" width="1" height="1"/><rect x="891" y="154" width="1" height="1"/><rect x="897" y="154" width="1" height="1"/><rect x="902" y="153" width="1" height="2"/><rect x="908" y="154" width="1" height="1"/><rect x="914" y="154" width="1" height="1"/><rect x="919" y="154" width="1" height="1"/><rect x="925" y="154" width="1" height="1"/><rect x="931" y="150" width="1" height="5"/><rect x="936" y="154" width="1" height="1"/><rect x="942" y="154" width="1" height="1"/><rect x="948" y="154" width="1" height="1"/><rect x="953" y="154" width="1" height="1"/><rect x="959" y="153" width="1" height="2"/><rect x="965" y="154" width="1" height="1"/><rect x="970" y="154" width="1" height="1"/><rect x="976" y="154" width="1" height="1"/><rect x="982" y="154" width="1" height="1"/><rect x="987" y="150" width="1" height="5"/><rect x="993" y="154" width="1" height="1"/><rect x="999" y="154" width="1" height="1"/><rect x="1004" y="154" width="1" height="1"/><rect x="1010" y="154" width="1" height="1"/><rect x="1016" y="153" width="1" height="2"/><rect x="1021" y="154" width="1" height="1"/><rect x="1027" y="154" width="1" height="1"/><rect x="1033" y="154" width="1" height="1"/><rect x="1038" y="154" width="1" height="1"/><rect x="1044" y="150" width="1" height="5"/><rect x="1050" y="154" width="1" height="1"/><rect x="1055" y="154" width="1" height="1"/><rect x="1061" y="154" width="1" height="1"/><rect x="1067" y="154" width="1" height="1"/><rect x="1072" y="153" width="1" height="2"/><rect x="1078" y="154" width="1" height="1"/><rect x="1084" y="154" width="1" height="1"/><rect x="1089" y="154" width="1" height="1"/><rect x="1095" y="154" width="1" height="1"/><rect x="1101" y="150" width="1" height="5"/><rect x="1106" y="154" width="1" height="1"/><rect x="1112" y="154" width="1" height="1"/><rect x="1118" y="154" width="1" height="1"/></g></svg>
<div class="t" style="left:71px;top:141px;font-size:9.5px;line-height:10px;width:19px;text-align:center;color:#c4c4c4">30</div>
<div class="t" style="left:128px;top:141px;font-size:9.5px;line-height:10px;width:19px;text-align:center;color:#c4c4c4">40</div>
<div class="t" style="left:185px;top:141px;font-size:9.5px;line-height:10px;width:19px;text-align:center;color:#c4c4c4">50</div>
<div class="t" style="left:241px;top:141px;font-size:9.5px;line-height:10px;width:19px;text-align:center;color:#c4c4c4">60</div>
<div class="t" style="left:298px;top:141px;font-size:9.5px;line-height:10px;width:19px;text-align:center;color:#c4c4c4">70</div>
<div class="t" style="left:355px;top:141px;font-size:9.5px;line-height:10px;width:19px;text-align:center;color:#c4c4c4">80</div>
<div class="t" style="left:412px;top:141px;font-size:9.5px;line-height:10px;width:19px;text-align:center;color:#c4c4c4">90</div>
<div class="t" style="left:468px;top:141px;font-size:9.5px;line-height:10px;width:19px;text-align:center;color:#c4c4c4">100</div>
<div class="t" style="left:525px;top:141px;font-size:9.5px;line-height:10px;width:19px;text-align:center;color:#c4c4c4">110</div>
<div class="t" style="left:582px;top:141px;font-size:9.5px;line-height:10px;width:19px;text-align:center;color:#c4c4c4">120</div>
<div class="t" style="left:638px;top:141px;font-size:9.5px;line-height:10px;width:19px;text-align:center;color:#c4c4c4">130</div>
<div class="t" style="left:695px;top:141px;font-size:9.5px;line-height:10px;width:19px;text-align:center;color:#c4c4c4">140</div>
<div class="t" style="left:752px;top:141px;font-size:9.5px;line-height:10px;width:19px;text-align:center;color:#c4c4c4">150</div>
<div class="t" style="left:808px;top:141px;font-size:9.5px;line-height:10px;width:19px;text-align:center;color:#c4c4c4">160</div>
<div class="t" style="left:865px;top:141px;font-size:9.5px;line-height:10px;width:19px;text-align:center;color:#c4c4c4">170</div>
<div class="t" style="left:922px;top:141px;font-size:9.5px;line-height:10px;width:19px;text-align:center;color:#c4c4c4">180</div>
<div class="t" style="left:978px;top:141px;font-size:9.5px;line-height:10px;width:19px;text-align:center;color:#c4c4c4">190</div>
<div class="t" style="left:1035px;top:141px;font-size:9.5px;line-height:10px;width:19px;text-align:center;color:#c4c4c4">200</div>
<div class="t" style="left:1075px;top:141px;font-size:9.5px;line-height:10px;color:#c4c4c4">millimeters</div>
<div class="t" style="left:25px;top:695px;font-size:9.5px;line-height:10px;width:24px;text-align:center;color:#c4c4c4;transform:rotate(-90deg);transform-origin:12px 5px;left:27px">110</div>
<div class="t" style="left:25px;top:639px;font-size:9.5px;line-height:10px;width:24px;text-align:center;color:#c4c4c4;transform:rotate(-90deg);transform-origin:12px 5px;left:27px">120</div>
<div class="t" style="left:25px;top:582px;font-size:9.5px;line-height:10px;width:24px;text-align:center;color:#c4c4c4;transform:rotate(-90deg);transform-origin:12px 5px;left:27px">130</div>
<div class="t" style="left:25px;top:525px;font-size:9.5px;line-height:10px;width:24px;text-align:center;color:#c4c4c4;transform:rotate(-90deg);transform-origin:12px 5px;left:27px">140</div>
<div class="t" style="left:25px;top:469px;font-size:9.5px;line-height:10px;width:24px;text-align:center;color:#c4c4c4;transform:rotate(-90deg);transform-origin:12px 5px;left:27px">150</div>
<div class="t" style="left:25px;top:412px;font-size:9.5px;line-height:10px;width:24px;text-align:center;color:#c4c4c4;transform:rotate(-90deg);transform-origin:12px 5px;left:27px">160</div>
<div class="t" style="left:25px;top:355px;font-size:9.5px;line-height:10px;width:24px;text-align:center;color:#c4c4c4;transform:rotate(-90deg);transform-origin:12px 5px;left:27px">170</div>
<div class="t" style="left:25px;top:298px;font-size:9.5px;line-height:10px;width:24px;text-align:center;color:#c4c4c4;transform:rotate(-90deg);transform-origin:12px 5px;left:27px">180</div>
<div class="t" style="left:25px;top:242px;font-size:9.5px;line-height:10px;width:24px;text-align:center;color:#c4c4c4;transform:rotate(-90deg);transform-origin:12px 5px;left:27px">190</div>
<div class="t" style="left:25px;top:185px;font-size:9.5px;line-height:10px;width:24px;text-align:center;color:#c4c4c4;transform:rotate(-90deg);transform-origin:12px 5px;left:27px">200</div>
<svg style="left:0;top:0" width="1440" height="863"><g fill="#cfcfcf"><rect x="47" y="763" width="1" height="1"/><rect x="43" y="757" width="5" height="1"/><rect x="47" y="751" width="1" height="1"/><rect x="47" y="746" width="1" height="1"/><rect x="47" y="740" width="1" height="1"/><rect x="47" y="734" width="1" height="1"/><rect x="46" y="729" width="2" height="1"/><rect x="47" y="723" width="1" height="1"/><rect x="47" y="717" width="1" height="1"/><rect x="47" y="712" width="1" height="1"/><rect x="47" y="706" width="1" height="1"/><rect x="43" y="700" width="5" height="1"/><rect x="47" y="695" width="1" height="1"/><rect x="47" y="689" width="1" height="1"/><rect x="47" y="683" width="1" height="1"/><rect x="47" y="678" width="1" height="1"/><rect x="46" y="672" width="2" height="1"/><rect x="47" y="666" width="1" height="1"/><rect x="47" y="661" width="1" height="1"/><rect x="47" y="655" width="1" height="1"/><rect x="47" y="649" width="1" height="1"/><rect x="43" y="644" width="5" height="1"/><rect x="47" y="638" width="1" height="1"/><rect x="47" y="632" width="1" height="1"/><rect x="47" y="627" width="1" height="1"/><rect x="47" y="621" width="1" height="1"/><rect x="46" y="615" width="2" height="1"/><rect x="47" y="610" width="1" height="1"/><rect x="47" y="604" width="1" height="1"/><rect x="47" y="598" width="1" height="1"/><rect x="47" y="593" width="1" height="1"/><rect x="43" y="587" width="5" height="1"/><rect x="47" y="581" width="1" height="1"/><rect x="47" y="576" width="1" height="1"/><rect x="47" y="570" width="1" height="1"/><rect x="47" y="564" width="1" height="1"/><rect x="46" y="559" width="2" height="1"/><rect x="47" y="553" width="1" height="1"/><rect x="47" y="547" width="1" height="1"/><rect x="47" y="542" width="1" height="1"/><rect x="47" y="536" width="1" height="1"/><rect x="43" y="530" width="5" height="1"/><rect x="47" y="525" width="1" height="1"/><rect x="47" y="519" width="1" height="1"/><rect x="47" y="513" width="1" height="1"/><rect x="47" y="508" width="1" height="1"/><rect x="46" y="502" width="2" height="1"/><rect x="47" y="496" width="1" height="1"/><rect x="47" y="491" width="1" height="1"/><rect x="47" y="485" width="1" height="1"/><rect x="47" y="479" width="1" height="1"/><rect x="43" y="474" width="5" height="1"/><rect x="47" y="468" width="1" height="1"/><rect x="47" y="462" width="1" height="1"/><rect x="47" y="457" width="1" height="1"/><rect x="47" y="451" width="1" height="1"/><rect x="46" y="445" width="2" height="1"/><rect x="47" y="440" width="1" height="1"/><rect x="47" y="434" width="1" height="1"/><rect x="47" y="428" width="1" height="1"/><rect x="47" y="423" width="1" height="1"/><rect x="43" y="417" width="5" height="1"/><rect x="47" y="411" width="1" height="1"/><rect x="47" y="406" width="1" height="1"/><rect x="47" y="400" width="1" height="1"/><rect x="47" y="394" width="1" height="1"/><rect x="46" y="389" width="2" height="1"/><rect x="47" y="383" width="1" height="1"/><rect x="47" y="377" width="1" height="1"/><rect x="47" y="372" width="1" height="1"/><rect x="47" y="366" width="1" height="1"/><rect x="43" y="360" width="5" height="1"/><rect x="47" y="355" width="1" height="1"/><rect x="47" y="349" width="1" height="1"/><rect x="47" y="343" width="1" height="1"/><rect x="47" y="337" width="1" height="1"/><rect x="46" y="332" width="2" height="1"/><rect x="47" y="326" width="1" height="1"/><rect x="47" y="320" width="1" height="1"/><rect x="47" y="315" width="1" height="1"/><rect x="47" y="309" width="1" height="1"/><rect x="43" y="303" width="5" height="1"/><rect x="47" y="298" width="1" height="1"/><rect x="47" y="292" width="1" height="1"/><rect x="47" y="286" width="1" height="1"/><rect x="47" y="281" width="1" height="1"/><rect x="46" y="275" width="2" height="1"/><rect x="47" y="269" width="1" height="1"/><rect x="47" y="264" width="1" height="1"/><rect x="47" y="258" width="1" height="1"/><rect x="47" y="252" width="1" height="1"/><rect x="43" y="247" width="5" height="1"/><rect x="47" y="241" width="1" height="1"/><rect x="47" y="235" width="1" height="1"/><rect x="47" y="230" width="1" height="1"/><rect x="47" y="224" width="1" height="1"/><rect x="46" y="218" width="2" height="1"/><rect x="47" y="213" width="1" height="1"/><rect x="47" y="207" width="1" height="1"/><rect x="47" y="201" width="1" height="1"/><rect x="47" y="196" width="1" height="1"/><rect x="43" y="190" width="5" height="1"/><rect x="47" y="184" width="1" height="1"/><rect x="47" y="179" width="1" height="1"/><rect x="47" y="173" width="1" height="1"/><rect x="47" y="167" width="1" height="1"/><rect x="46" y="162" width="2" height="1"/></g></svg>
<div class="a" style="left:50px;top:157px;width:1051px;height:591px;background:#ffffff;"></div>
<svg style="left:0;top:0" width="1440" height="863"><g fill="#262324"><polygon points="563.30,250.50 568.41,266.16 584.89,266.19 571.57,275.89 576.64,291.56 563.30,281.90 549.96,291.56 555.03,275.89 541.71,266.19 558.19,266.16"/><polygon points="616.20,257.46 617.09,273.92 633.00,278.20 617.62,284.13 618.46,300.58 608.08,287.79 592.69,293.68 601.64,279.85 591.29,267.03 607.21,271.27"/><polygon points="665.50,277.88 662.10,294.00 676.35,302.26 659.97,304.01 656.52,320.12 649.80,305.08 633.41,306.78 645.64,295.73 638.96,280.67 653.24,288.89"/><polygon points="707.83,310.37 700.37,325.06 712.01,336.72 695.73,334.17 688.23,348.84 685.63,332.57 669.36,329.97 684.03,322.47 681.48,306.19 693.14,317.83"/><polygon points="740.32,352.70 729.31,364.96 737.53,379.24 722.47,372.56 711.42,384.79 713.12,368.40 698.08,361.68 714.19,358.23 715.94,341.85 724.20,356.10"/><polygon points="760.74,402.00 746.93,410.99 751.17,426.91 738.35,416.56 724.52,425.51 730.41,410.12 717.62,399.74 734.07,400.58 740.00,385.20 744.28,401.11"/><polygon points="767.70,454.90 752.04,460.01 752.01,476.49 742.31,463.17 726.64,468.24 736.30,454.90 726.64,441.56 742.31,446.63 752.01,433.31 752.04,449.79"/><polygon points="760.74,507.80 744.28,508.69 740.00,524.60 734.07,509.22 717.62,510.06 730.41,499.68 724.52,484.29 738.35,493.24 751.17,482.89 746.93,498.81"/><polygon points="740.32,557.10 724.20,553.70 715.94,567.95 714.19,551.57 698.08,548.12 713.12,541.40 711.42,525.01 722.47,537.24 737.53,530.56 729.31,544.84"/><polygon points="707.83,599.43 693.14,591.97 681.48,603.61 684.03,587.33 669.36,579.83 685.63,577.23 688.23,560.96 695.73,575.63 712.01,573.08 700.37,584.74"/><polygon points="665.50,631.92 653.24,620.91 638.96,629.13 645.64,614.07 633.41,603.02 649.80,604.72 656.52,589.68 659.97,605.79 676.35,607.54 662.10,615.80"/><polygon points="616.20,652.34 607.21,638.53 591.29,642.77 601.64,629.95 592.69,616.12 608.08,622.01 618.46,609.22 617.62,625.67 633.00,631.60 617.09,635.88"/><polygon points="563.30,659.30 558.19,643.64 541.71,643.61 555.03,633.91 549.96,618.24 563.30,627.90 576.64,618.24 571.57,633.91 584.89,643.61 568.41,643.64"/><polygon points="510.40,652.34 509.51,635.88 493.60,631.60 508.98,625.67 508.14,609.22 518.52,622.01 533.91,616.12 524.96,629.95 535.31,642.77 519.39,638.53"/><polygon points="461.10,631.92 464.50,615.80 450.25,607.54 466.63,605.79 470.08,589.68 476.80,604.72 493.19,603.02 480.96,614.07 487.64,629.13 473.36,620.91"/><polygon points="418.77,599.43 426.23,584.74 414.59,573.08 430.87,575.63 438.37,560.96 440.97,577.23 457.24,579.83 442.57,587.33 445.12,603.61 433.46,591.97"/><polygon points="386.28,557.10 397.29,544.84 389.07,530.56 404.13,537.24 415.18,525.01 413.48,541.40 428.52,548.12 412.41,551.57 410.66,567.95 402.40,553.70"/><polygon points="365.86,507.80 379.67,498.81 375.43,482.89 388.25,493.24 402.08,484.29 396.19,499.68 408.98,510.06 392.53,509.22 386.60,524.60 382.32,508.69"/><polygon points="358.90,454.90 374.56,449.79 374.59,433.31 384.29,446.63 399.96,441.56 390.30,454.90 399.96,468.24 384.29,463.17 374.59,476.49 374.56,460.01"/><polygon points="365.86,402.00 382.32,401.11 386.60,385.20 392.53,400.58 408.98,399.74 396.19,410.12 402.08,425.51 388.25,416.56 375.43,426.91 379.67,410.99"/><polygon points="386.28,352.70 402.40,356.10 410.66,341.85 412.41,358.23 428.52,361.68 413.48,368.40 415.18,384.79 404.13,372.56 389.07,379.24 397.29,364.96"/><polygon points="418.77,310.37 433.46,317.83 445.12,306.19 442.57,322.47 457.24,329.97 440.97,332.57 438.37,348.84 430.87,334.17 414.59,336.72 426.23,325.06"/><polygon points="461.10,277.88 473.36,288.89 487.64,280.67 480.96,295.73 493.19,306.78 476.80,305.08 470.08,320.12 466.63,304.01 450.25,302.26 464.50,294.00"/><polygon points="510.40,257.46 519.39,271.27 535.31,267.03 524.96,279.85 533.91,293.68 518.52,287.79 508.14,300.58 508.98,284.13 493.60,278.20 509.51,273.92"/></g></svg>
<div class="a" style="left:1101px;top:157px;width:22px;height:591px;background:#595959;"></div>
<div class="a" style="left:1106px;top:157px;width:17px;height:17px;background:#f0f0f0;"></div>
<svg style="left:1110px;top:162px;" width="9" height="6" viewBox="0 0 9 6"><path d="M0.5 5.5 L4.5 1.2 L8.5 5.5" fill="none" stroke="#3a3a3a" stroke-width="1.8"/></svg>
<div class="a" style="left:1106px;top:401px;width:17px;height:94px;background:#cdcdcd;"></div>
<div class="a" style="left:1106px;top:731px;width:17px;height:17px;background:#f0f0f0;"></div>
<svg style="left:1110px;top:736px;" width="9" height="6" viewBox="0 0 9 6"><path d="M0.5 0.5 L4.5 4.8 L8.5 0.5" fill="none" stroke="#3a3a3a" stroke-width="1.8"/></svg>
<div class="a" style="left:1123px;top:118px;width:5px;height:704px;background:#2a2a2a;"></div>
<div class="a" style="left:50px;top:748px;width:1051px;height:1px;background:#000;"></div>
<div class="a" style="left:50px;top:749px;width:540px;height:16px;background:#393939;"></div>
<svg style="left:52px;top:751px;" width="10" height="11" viewBox="0 0 10 11"><path d="M2.5 0.5 H9.5 V10.5 H0.5 V2.5 Z" fill="none" stroke="#b8b8b8" stroke-width="1"/><path d="M5 4 V9 M2.5 6.5 H7.5" stroke="#b8b8b8" stroke-width="1"/></svg>
<svg style="left:69px;top:751px;" width="10" height="11" viewBox="0 0 10 11"><path d="M0.5 0 V11" stroke="#4a4a4a" stroke-width="1.4"/><path d="M10 0.5 L2.5 5.5 L10 10.5 Z" fill="#4a4a4a"/></svg>
<svg style="left:87px;top:751px;" width="8" height="11" viewBox="0 0 8 11"><path d="M8 0.5 L0.5 5.5 L8 10.5 Z" fill="#4a4a4a"/></svg>
<div class="t" style="left:101px;top:750px;color:#555;font-size:12px;word-spacing:2px">1 of 1</div>
<svg style="left:144px;top:751px;" width="8" height="11" viewBox="0 0 8 11"><path d="M0 0.5 L7.5 5.5 L0 10.5 Z" fill="#4a4a4a"/></svg>
<svg style="left:158px;top:751px;" width="10" height="11" viewBox="0 0 10 11"><path d="M9.5 0 V11" stroke="#4a4a4a" stroke-width="1.4"/><path d="M0 0.5 L7.5 5.5 L0 10.5 Z" fill="#4a4a4a"/></svg>
<svg style="left:175px;top:751px;" width="10" height="11" viewBox="0 0 10 11"><path d="M2.5 0.5 H9.5 V10.5 H0.5 V2.5 Z" fill="none" stroke="#b8b8b8" stroke-width="1"/><path d="M5 4 V9 M2.5 6.5 H7.5" stroke="#b8b8b8" stroke-width="1"/></svg>
<svg style="left:196px;top:748px;" width="62" height="17" viewBox="0 0 62 17"><path d="M0.5 0 H61.5 L57.5 16 H4.5 Z" fill="#4a4a4a"/><path d="M0.8 0 L4.6 15.6 H57.4 L61.2 0" fill="none" stroke="#a8a8a8" stroke-width="1"/></svg>
<div class="t" style="left:209px;top:749px;color:#d0d0d0;font-size:11px">Page 1</div>
<svg style="left:576px;top:751px;" width="10" height="13" viewBox="0 0 10 13"><g fill="#6a6a6a"><rect x="0" y="0" width="1" height="1"/><rect x="4" y="0" width="1" height="1"/><rect x="2" y="2" width="1" height="1"/><rect x="6" y="2" width="1" height="1"/><rect x="0" y="4" width="1" height="1"/><rect x="4" y="4" width="1" height="1"/><rect x="2" y="6" width="1" height="1"/><rect x="6" y="6" width="1" height="1"/><rect x="0" y="8" width="1" height="1"/><rect x="4" y="8" width="1" height="1"/><rect x="2" y="10" width="1" height="1"/><rect x="6" y="10" width="1" height="1"/></g></svg>
<div class="a" style="left:588px;top:748px;width:17px;height:17px;background:#f4f4f4;"></div>
<svg style="left:593px;top:753px;" width="7" height="8" viewBox="0 0 7 8"><path d="M5.8 0.6 L1.6 4 L5.8 7.4" fill="none" stroke="#404040" stroke-width="2"/></svg>
<div class="a" style="left:605px;top:748px;width:485px;height:17px;background:#595959;"></div>
<div class="a" style="left:761px;top:748px;width:198px;height:17px;background:#cdcdcd;"></div>
<div class="a" style="left:1089px;top:748px;width:17px;height:17px;background:#f0f0f0;"></div>
<svg style="left:1095px;top:752px;" width="6" height="9" viewBox="0 0 6 9"><path d="M0.5 0.5 L4.8 4.5 L0.5 8.5" fill="none" stroke="#3a3a3a" stroke-width="1.8"/></svg>
<div class="a" style="left:1106px;top:748px;width:17px;height:17px;background:#555555;"></div>
<svg style="left:1108px;top:750px;" width="14" height="14" viewBox="0 0 14 14"><circle cx="6" cy="6" r="4.6" fill="none" stroke="#d0d0d0" stroke-width="1"/><path d="M9.3 9.3 L12.8 12.8" stroke="#d0d0d0" stroke-width="1.5"/><circle cx="6" cy="4" r="0.8" fill="#d0d0d0"/><circle cx="6" cy="8" r="0.8" fill="#d0d0d0"/><circle cx="4" cy="6" r="0.8" fill="#d0d0d0"/><circle cx="8" cy="6" r="0.8" fill="#d0d0d0"/></svg>
<div class="a" style="left:32px;top:765px;width:1093px;height:1px;background:#000;"></div>
<div class="a" style="left:32px;top:766px;width:1093px;height:35px;background:#393939;"></div>
<div class="a" style="left:32px;top:801px;width:1093px;height:1px;background:#000;"></div>
<div class="a" style="left:32px;top:802px;width:1093px;height:20px;background:#393939;"></div>
<svg style="left:34px;top:768px;" width="5" height="32" viewBox="0 0 5 32"><g fill="#5a5a5a"><rect x="0" y="0" width="1" height="1"/><rect x="2" y="0" width="1" height="1"/><rect x="2" y="2" width="1" height="1"/><rect x="0" y="4" width="1" height="1"/><rect x="2" y="4" width="1" height="1"/><rect x="2" y="6" width="1" height="1"/><rect x="0" y="8" width="1" height="1"/><rect x="2" y="8" width="1" height="1"/><rect x="2" y="10" width="1" height="1"/><rect x="0" y="12" width="1" height="1"/><rect x="2" y="12" width="1" height="1"/><rect x="2" y="14" width="1" height="1"/><rect x="0" y="16" width="1" height="1"/><rect x="2" y="16" width="1" height="1"/><rect x="2" y="18" width="1" height="1"/><rect x="0" y="20" width="1" height="1"/><rect x="2" y="20" width="1" height="1"/><rect x="2" y="22" width="1" height="1"/><rect x="0" y="24" width="1" height="1"/><rect x="2" y="24" width="1" height="1"/><rect x="2" y="26" width="1" height="1"/><rect x="0" y="28" width="1" height="1"/><rect x="2" y="28" width="1" height="1"/><rect x="2" y="30" width="1" height="1"/></g></svg>
<svg style="left:34px;top:804px;" width="5" height="16" viewBox="0 0 5 16"><g fill="#5a5a5a"><rect x="0" y="0" width="1" height="1"/><rect x="2" y="0" width="1" height="1"/><rect x="2" y="2" width="1" height="1"/><rect x="0" y="4" width="1" height="1"/><rect x="2" y="4" width="1" height="1"/><rect x="2" y="6" width="1" height="1"/><rect x="0" y="8" width="1" height="1"/><rect x="2" y="8" width="1" height="1"/><rect x="2" y="10" width="1" height="1"/><rect x="0" y="12" width="1" height="1"/><rect x="2" y="12" width="1" height="1"/><rect x="2" y="14" width="1" height="1"/></g></svg>
<svg style="left:45px;top:779px;" width="6" height="9" viewBox="0 0 6 9"><path d="M0.5 0.5 L5.5 4.5 L0.5 8.5 Z" fill="#a8a8a8"/></svg>
<svg style="left:62px;top:775px;" width="12" height="12" viewBox="0 0 12 12"><path d="M1 11 L10 2" stroke="#404040" stroke-width="2.4"/></svg>
<div class="a" style="left:76px;top:766px;width:1px;height:35px;background:#2c2c2c;"></div>
<svg style="left:0;top:0" width="1440" height="863"><rect x="79" y="766" width="1022" height="18" fill="#222"/><rect x="79" y="783" width="698" height="18" fill="#222"/><rect x="80" y="767" width="16" height="16" fill="#fff"/><path d="M82 781 L94 769" stroke="#e02030" stroke-width="1"/><rect x="97" y="767" width="16" height="16" fill="#232323"/><rect x="114" y="767" width="16" height="16" fill="#3c3c3c"/><rect x="131" y="767" width="16" height="16" fill="#535353"/><rect x="148" y="767" width="16" height="16" fill="#656565"/><rect x="165" y="767" width="16" height="16" fill="#777777"/><rect x="182" y="767" width="16" height="16" fill="#8a8a8a"/><rect x="199" y="767" width="16" height="16" fill="#9d9d9f"/><rect x="216" y="767" width="16" height="16" fill="#b3b3b5"/><rect x="233" y="767" width="16" height="16" fill="#c8c8ca"/><rect x="250" y="767" width="16" height="16" fill="#dddddf"/><rect x="267" y="767" width="16" height="16" fill="#ffffff"/><rect x="284" y="767" width="16" height="16" fill="#2e2a92"/><rect x="301" y="767" width="16" height="16" fill="#00a2e8"/><rect x="318" y="767" width="16" height="16" fill="#00a550"/><rect x="335" y="767" width="16" height="16" fill="#fff200"/><rect x="352" y="767" width="16" height="16" fill="#e8112d"/><rect x="369" y="767" width="16" height="16" fill="#e4008c"/><rect x="386" y="767" width="16" height="16" fill="#a23b8e"/><rect x="403" y="767" width="16" height="16" fill="#f07e33"/><rect x="420" y="767" width="16" height="16" fill="#f3a0a6"/><rect x="437" y="767" width="16" height="16" fill="#776c68"/><rect x="454" y="767" width="16" height="16" fill="#c9c0e3"/><rect x="471" y="767" width="16" height="16" fill="#9c8bc9"/><rect x="488" y="767" width="16" height="16" fill="#6e85c8"/><rect x="505" y="767" width="16" height="16" fill="#7763b3"/><rect x="522" y="767" width="16" height="16" fill="#8772ae"/><rect x="539" y="767" width="16" height="16" fill="#4d5a90"/><rect x="556" y="767" width="16" height="16" fill="#574a73"/><rect x="573" y="767" width="16" height="16" fill="#6b7a95"/><rect x="590" y="767" width="16" height="16" fill="#0a8ad8"/><rect x="607" y="767" width="16" height="16" fill="#a0d3f1"/><rect x="624" y="767" width="16" height="16" fill="#a8c4d8"/><rect x="641" y="767" width="16" height="16" fill="#8fa2ae"/><rect x="658" y="767" width="16" height="16" fill="#6b7b87"/><rect x="675" y="767" width="16" height="16" fill="#4a5a62"/><rect x="692" y="767" width="16" height="16" fill="#517a72"/><rect x="709" y="767" width="16" height="16" fill="#3f8c74"/><rect x="726" y="767" width="16" height="16" fill="#6a9f93"/><rect x="743" y="767" width="16" height="16" fill="#53a98c"/><rect x="760" y="767" width="16" height="16" fill="#5aad6e"/><rect x="777" y="767" width="16" height="16" fill="#5cc3cd"/><rect x="794" y="767" width="16" height="16" fill="#49a4b4"/><rect x="811" y="767" width="16" height="16" fill="#a8c0aa"/><rect x="828" y="767" width="16" height="16" fill="#c9e8cd"/><rect x="845" y="767" width="16" height="16" fill="#8cd49e"/><rect x="862" y="767" width="16" height="16" fill="#8a9c8c"/><rect x="879" y="767" width="16" height="16" fill="#8c9b78"/><rect x="896" y="767" width="16" height="16" fill="#a9c46e"/><rect x="913" y="767" width="16" height="16" fill="#a8c09a"/><rect x="930" y="767" width="16" height="16" fill="#9dd23c"/><rect x="947" y="767" width="16" height="16" fill="#c8e37a"/><rect x="964" y="767" width="16" height="16" fill="#5b5e50"/><rect x="981" y="767" width="16" height="16" fill="#7f8270"/><rect x="998" y="767" width="16" height="16" fill="#a9ab91"/><rect x="1015" y="767" width="16" height="16" fill="#a8a87c"/><rect x="1032" y="767" width="16" height="16" fill="#cfcd6c"/><rect x="1049" y="767" width="16" height="16" fill="#fff56c"/><rect x="1066" y="767" width="16" height="16" fill="#fffa9a"/><rect x="1083" y="767" width="16" height="16" fill="#fffcc8"/><rect x="80" y="784" width="16" height="16" fill="#a48a6c"/><rect x="97" y="784" width="16" height="16" fill="#c68b5c"/><rect x="114" y="784" width="16" height="16" fill="#d2ad62"/><rect x="131" y="784" width="16" height="16" fill="#ee7b42"/><rect x="148" y="784" width="16" height="16" fill="#f4a24e"/><rect x="165" y="784" width="16" height="16" fill="#f2a070"/><rect x="182" y="784" width="16" height="16" fill="#f5cf1e"/><rect x="199" y="784" width="16" height="16" fill="#f5d09c"/><rect x="216" y="784" width="16" height="16" fill="#7a6b4c"/><rect x="233" y="784" width="16" height="16" fill="#a4584a"/><rect x="250" y="784" width="16" height="16" fill="#c6683e"/><rect x="267" y="784" width="16" height="16" fill="#ec7a68"/><rect x="284" y="784" width="16" height="16" fill="#f0a48e"/><rect x="301" y="784" width="16" height="16" fill="#f6d4c4"/><rect x="318" y="784" width="16" height="16" fill="#9c6e78"/><rect x="335" y="784" width="16" height="16" fill="#c66a70"/><rect x="352" y="784" width="16" height="16" fill="#c2667e"/><rect x="369" y="784" width="16" height="16" fill="#e8004a"/><rect x="386" y="784" width="16" height="16" fill="#ee7878"/><rect x="403" y="784" width="16" height="16" fill="#e5507a"/><rect x="420" y="784" width="16" height="16" fill="#c98a90"/><rect x="437" y="784" width="16" height="16" fill="#7c5a70"/><rect x="454" y="784" width="16" height="16" fill="#a24f7e"/><rect x="471" y="784" width="16" height="16" fill="#f4a6cc"/><rect x="488" y="784" width="16" height="16" fill="#cc86ab"/><rect x="505" y="784" width="16" height="16" fill="#a28c99"/><rect x="522" y="784" width="16" height="16" fill="#d4a6c1"/><rect x="539" y="784" width="16" height="16" fill="#a9639b"/><rect x="556" y="784" width="16" height="16" fill="#c145a0"/><rect x="573" y="784" width="16" height="16" fill="#c472b4"/><rect x="590" y="784" width="16" height="16" fill="#a57ea8"/><rect x="607" y="784" width="16" height="16" fill="#cb97ca"/><rect x="624" y="784" width="16" height="16" fill="#6e4e70"/><rect x="641" y="784" width="16" height="16" fill="#8d6990"/><rect x="658" y="784" width="16" height="16" fill="#a873ba"/><rect x="675" y="784" width="16" height="16" fill="#a10099"/><rect x="692" y="784" width="16" height="16" fill="#973a94"/><rect x="709" y="784" width="16" height="16" fill="#8a4aa8"/><rect x="726" y="784" width="16" height="16" fill="#7b4a8a"/><rect x="743" y="784" width="16" height="16" fill="#6d3f98"/><rect x="760" y="784" width="16" height="16" fill="#000000"/><rect x="657.5" y="766.5" width="17" height="17" fill="none" stroke="#c8c8c8" stroke-width="1"/></svg>
<div class="a" style="left:1101px;top:766px;width:24px;height:35px;background:#393939;"></div>
<svg style="left:45px;top:807px;" width="6" height="9" viewBox="0 0 6 9"><path d="M0.5 0.5 L5.5 4.5 L0.5 8.5 Z" fill="#a8a8a8"/></svg>
<svg style="left:62px;top:804px;" width="14" height="15" viewBox="0 0 14 15"><path d="M1.2 13.8 L1.6 11.6 L8 5.2 L9.8 7 L3.4 13.4 Z" fill="#393939" stroke="#f0c0a0" stroke-width="1"/><path d="M8.2 3.2 L10.5 0.9 Q11.5 0.2 12.6 1.3 Q13.7 2.4 13 3.4 L10.7 5.7 Z" fill="#e0e0e0"/><path d="M6.8 4.2 L10.8 8.2" stroke="#e0e0e0" stroke-width="1.5"/></svg>
<svg style="left:83px;top:806px;" width="7" height="11" viewBox="0 0 7 11"><path d="M6 0.5 L1 5.5 L6 10.5" fill="none" stroke="#4a4a4a" stroke-width="1.8"/></svg>
<svg style="left:0;top:0" width="1440" height="863"><rect x="96.5" y="803.5" width="16" height="16" fill="#fff" stroke="#777" stroke-width="1"/><path d="M98 818 L111 805" stroke="#e02030" stroke-width="1"/><rect x="113.5" y="803.5" width="16" height="16" fill="#262626" stroke="#555" stroke-width="1"/></svg>
<svg style="left:1085px;top:806px;" width="8" height="11" viewBox="0 0 8 11"><path d="M1 0.5 L6.5 5.5 L1 10.5" fill="none" stroke="#4a4a4a" stroke-width="2"/></svg>
<svg style="left:1103px;top:808px;" width="9" height="8" viewBox="0 0 9 8"><path d="M0.5 0.5 L3.8 4 L0.5 7.5 M4.5 0.5 L7.8 4 L4.5 7.5" fill="none" stroke="#5a5a5a" stroke-width="1.2"/></svg>
<div class="a" style="left:32px;top:822px;width:1093px;height:1px;background:#000;"></div>
<div class="a" style="left:0px;top:822px;width:1440px;height:1px;background:#000;"></div>
<div class="a" style="left:0px;top:823px;width:1440px;height:36px;background:#393939;"></div>
<div class="a" style="left:0px;top:859px;width:1440px;height:4px;background:#000;"></div>
<div class="a" style="left:392px;top:859px;width:48px;height:4px;background:#3a3a3a;"></div>
<svg style="left:11px;top:833px;" width="17" height="17" viewBox="0 0 17 17"><path d="M16.83 6.81 L16.83 10.19 L14.55 10.78 L14.38 11.17 L15.58 13.20 L13.20 15.58 L11.17 14.38 L10.78 14.55 L10.19 16.83 L6.81 16.83 L6.22 14.55 L5.83 14.38 L3.80 15.58 L1.42 13.20 L2.62 11.17 L2.45 10.78 L0.17 10.19 L0.17 6.81 L2.45 6.22 L2.62 5.83 L1.42 3.80 L3.80 1.42 L5.83 2.62 L6.22 2.45 L6.81 0.17 L10.19 0.17 L10.78 2.45 L11.17 2.62 L13.20 1.42 L15.58 3.80 L14.38 5.83 L14.55 6.22 Z" fill="#d8d8d8"/><circle cx="8.5" cy="8.5" r="3.57" fill="#393939"/></svg>
<svg style="left:24px;top:846px;" width="5" height="5" viewBox="0 0 5 5"><path d="M5 0 V5 H0 Z" fill="#aaa"/></svg>
<div class="t" style="left:37px;top:834px;color:#d6d6d6">Next click for Drag/Scale; Second click for Rotate/Skew; Dbl-clicking tool selects all objects; Shift+click multi-selects; Alt+click digs</div>
<svg style="left:952px;top:832px;" width="19" height="19" viewBox="0 0 19 19"><path d="M8 1.5 L14.5 8 L8 14.5 L1.5 8 Z" fill="#2a1a1e" stroke="#e0e0e0" stroke-width="1.5"/>
<path d="M4.5 8.5 H11.5 L8 12 Z" fill="#e8557a"/><path d="M16 10 V16 H10.5 Z" fill="#e8557a"/></svg>
<svg style="left:971px;top:830px;" width="22" height="21" viewBox="0 0 22 21"><rect x="0.5" y="0.5" width="21" height="20" fill="#fff" stroke="#666" stroke-width="1"/><path d="M1 20 L21 1" stroke="#d42030" stroke-width="1.8"/></svg>
<div class="t" style="left:997px;top:834px;color:#d6d6d6">None</div>
<svg style="left:1158px;top:832px;" width="10" height="18" viewBox="0 0 10 18"><path d="M5 0.8 L8.5 7 L6.5 11 H3.5 L1.5 7 Z" fill="none" stroke="#e0e0e0" stroke-width="1.1"/>
<path d="M5 4 V9" stroke="#e0e0e0" stroke-width="0.9"/><rect x="2.8" y="12" width="4.4" height="4.5" fill="none" stroke="#e0e0e0" stroke-width="1.1"/></svg>
<svg style="left:1170px;top:830px;" width="22" height="22" viewBox="0 0 22 22"><rect x="0.5" y="0.5" width="21" height="21" fill="#262626" stroke="#5a5a5a" stroke-width="1"/></svg>
<div class="t" style="left:1196px;top:834px;color:#d6d6d6;font-size:11.5px">C:0 M:0 Y:0 K:100&nbsp; 0.176 mm</div>
<div class="a" style="left:1402px;top:830px;width:1px;height:22px;background:#000;"></div>
<svg style="left:1412px;top:832px;" width="18" height="17" viewBox="0 0 18 17"><rect x="0.5" y="0.5" width="16" height="11" fill="#3ea8e8" stroke="#e0e0e0" stroke-width="1"/>
<rect x="1" y="1" width="15" height="5" fill="#e05064"/>
<ellipse cx="8.5" cy="6" rx="3.5" ry="2" fill="#fff"/><circle cx="8.5" cy="6" r="1" fill="#393939"/>
<path d="M5 15.5 H12 M8.5 12 V15" stroke="#e0e0e0" stroke-width="1.2"/></svg>
<div class="a" style="left:1125px;top:118px;width:1px;height:704px;background:#444444;"></div>
<div class="a" style="left:1128px;top:118px;width:312px;height:22px;background:#2e2e2e;"></div>
<div class="t" style="left:1135px;top:122px;color:#d8d8d8">Transform</div>
<svg style="left:1405px;top:124px;" width="10" height="9" viewBox="0 0 10 9"><path d="M0.5 0.5 L4.5 4.5 L0.5 8.5 Z M5 0.5 L9 4.5 L5 8.5 Z" fill="#6a6a6a"/></svg>
<svg style="left:1424px;top:124px;" width="9" height="9" viewBox="0 0 9 9"><path d="M0.5 0.5 L8.5 8.5 M8.5 0.5 L0.5 8.5" stroke="#6a6a6a" stroke-width="1.3"/></svg>
<div class="a" style="left:1128px;top:140px;width:291px;height:1px;background:#000;"></div>
<div class="a" style="left:1128px;top:141px;width:291px;height:681px;background:#383838;"></div>
<div class="a" style="left:1128px;top:141px;width:291px;height:2px;background:#3d3d3d;"></div>
<div class="a" style="left:1419px;top:140px;width:21px;height:682px;background:#2b2b2b;"></div>
<div class="a" style="left:1419px;top:140px;width:1px;height:682px;background:#3a80d0;"></div>
<div class="a" style="left:1420px;top:141px;width:20px;height:100px;background:#0f6fe0;"></div>
<svg style="left:1421px;top:143px;" width="16" height="22" viewBox="0 0 16 22"><path d="M11 1 V8 M7.5 4.5 H14.5" stroke="#ffffff" stroke-width="1.1"/><path d="M9.5 2.5 L11 1 L12.5 2.5 M9.5 6.5 L11 8 L12.5 6.5 M9 3 L7.5 4.5 L9 6 M13 3 L14.5 4.5 L13 6" fill="none" stroke="#fff" stroke-width="0.9"/>
<path d="M9.5 14 A4.5 4.5 0 1 1 7 10.2" fill="none" stroke="#fff" stroke-width="1.2"/><path d="M4.5 9 L8 9.5 L6.5 12.5 Z" fill="#fff"/></svg>
<div class="t" style="left:1423px;top:167px;color:#e8f0ff;transform:rotate(90deg);transform-origin:0 0;left:1437px;font-size:12px">Transform</div>
<div class="a" style="left:1420px;top:241px;width:20px;height:92px;background:#474747;"></div>
<svg style="left:1421px;top:245px;" width="17" height="17" viewBox="0 0 17 17"><rect x="0.5" y="0.5" width="15" height="15" fill="none" stroke="#e0e0e0" stroke-width="1.1"/><rect x="3.5" y="3.5" width="9" height="9" fill="none" stroke="#e0e0e0" stroke-width="1.1"/></svg>
<div class="t" style="left:1423px;top:268px;color:#dcdcdc;transform:rotate(90deg);transform-origin:0 0;left:1437px;font-size:12px">Contour</div>
<svg style="left:1424px;top:339px;" width="13" height="13" viewBox="0 0 13 13"><path d="M6.5 0 V13 M0 6.5 H13" stroke="#6a6a6a" stroke-width="1.5"/></svg>
<svg style="left:1136px;top:149px;" width="17" height="17" viewBox="0 0 17 17"><path d="M8 1.5 V14.5 M1.5 8 H14.5" stroke="#e4e4e4" stroke-width="1.3"/>
<path d="M8 0 L5.8 2.6 H10.2 Z M8 16 L5.8 13.4 H10.2 Z M0 8 L2.6 5.8 V10.2 Z M16 8 L13.4 5.8 V10.2 Z" fill="#e4e4e4"/>
<rect x="7" y="7" width="2" height="2" fill="#393939"/></svg>
<div class="a" style="left:1161px;top:145px;width:24px;height:24px;background:#262626;border:1px solid #000"></div>
<svg style="left:1165px;top:149px;" width="17" height="17" viewBox="0 0 17 17"><path d="M4.85 4.15 A6.3 6.3 0 1 1 3 8.6" fill="none" stroke="#e4e4e4" stroke-width="1.1"/><path d="M0.6 7.6 H5.4 L3 11.2 Z" fill="#e4e4e4"/></svg>
<svg style="left:1193px;top:148px;" width="18" height="18" viewBox="0 0 18 18"><path d="M8.7 8.7 L13.6 1.4 H6 L1.1 8.7 L6 16.5 H13.6 Z M1.1 8.7 H8.7" fill="none" stroke="#e4e4e4" stroke-width="1.1" stroke-linejoin="round"/>
<path d="M15.4 0.8 V9.2 M14 7.6 L15.4 9.4 L16.8 7.6" fill="none" stroke="#e4e4e4" stroke-width="1"/></svg>
<svg style="left:1222px;top:148px;" width="18" height="18" viewBox="0 0 18 18"><path d="M1.5 7 V1.5 H16.5 V16.5 H11" fill="none" stroke="#e4e4e4" stroke-width="1.2" stroke-dasharray="1.2 1.1"/>
<rect x="1.5" y="8.5" width="8.5" height="8" fill="none" stroke="#e4e4e4" stroke-width="1.1"/>
<path d="M5.6 7 V3.2 M4.1 4.7 L5.6 3.2 L7.1 4.7 M11.3 12.5 H15 M13.5 11 L15 12.5 L13.5 14" fill="none" stroke="#e4e4e4" stroke-width="1"/></svg>
<svg style="left:1251px;top:148px;" width="18" height="18" viewBox="0 0 18 18"><path d="M1.4 2.3 H10.2" stroke="#e4e4e4" stroke-width="1"/><path d="M1.4 4.3 H12.8 L16.9 16.5 H4.9 Z" fill="none" stroke="#e4e4e4" stroke-width="1.1"/></svg>
<div class="t" style="left:1133px;top:183px;font-weight:bold;color:#d8d8d8">Rotate</div>
<div class="t" style="left:1173px;top:214px;color:#d0d0d0">Angle:</div>
<svg style="left:0;top:0" width="1440" height="863"><rect x="1212.5" y="210.5" width="79" height="23" fill="none" stroke="#4a4a4a"/><path d="M1273.5 210 V234" stroke="#4a4a4a"/><path d="M1279 219.0 L1282 216.0 L1285 219.0 M1279 225.0 L1282 228.0 L1285 225.0" fill="none" stroke="#505050" stroke-width="1"/></svg>
<div class="t" style="left:1216px;top:216px;width:56px;overflow:hidden;color:#6a6a6a">15.0</div>
<svg style="left:1301px;top:214px;" width="9" height="9" viewBox="0 0 9 9"><circle cx="4.5" cy="4.5" r="3.8" fill="none" stroke="#484848" stroke-width="1"/></svg>
<div class="a" style="left:1133px;top:248px;width:281px;height:1px;background:#000;"></div>
<div class="t" style="left:1132px;top:272px;font-weight:bold;color:#d8d8d8">Center</div>
<svg style="left:1142px;top:309px;" width="34" height="34" viewBox="0 0 34 34"><rect x="0.5" y="0.5" width="8" height="8" fill="none" stroke="#5a5a5a" stroke-width="1"/><rect x="0.5" y="12.5" width="8" height="8" fill="none" stroke="#5a5a5a" stroke-width="1"/><rect x="0.5" y="24.5" width="8" height="8" fill="none" stroke="#5a5a5a" stroke-width="1"/><rect x="12.5" y="0.5" width="8" height="8" fill="none" stroke="#5a5a5a" stroke-width="1"/><rect x="12.5" y="12.5" width="8" height="8" fill="none" stroke="#5a5a5a" stroke-width="1"/><rect x="12.5" y="24.5" width="8" height="8" fill="none" stroke="#5a5a5a" stroke-width="1"/><rect x="24.5" y="0.5" width="8" height="8" fill="none" stroke="#5a5a5a" stroke-width="1"/><rect x="24.5" y="12.5" width="8" height="8" fill="none" stroke="#5a5a5a" stroke-width="1"/><rect x="24.5" y="24.5" width="8" height="8" fill="none" stroke="#5a5a5a" stroke-width="1"/><path d="M8.5 4.5 H12.5 M20.5 4.5 H24.5 M8.5 28.5 H12.5 M20.5 28.5 H24.5" stroke="#5a5a5a" stroke-width="1"/></svg>
<div class="t" style="left:1197px;top:304px;color:#d0d0d0">X:</div>
<svg style="left:0;top:0" width="1440" height="863"><rect x="1212.5" y="299.5" width="79" height="23" fill="none" stroke="#4a4a4a"/><path d="M1273.5 299 V323" stroke="#4a4a4a"/><path d="M1279 308.0 L1282 305.0 L1285 308.0 M1279 314.0 L1282 317.0 L1285 314.0" fill="none" stroke="#505050" stroke-width="1"/></svg>
<div class="t" style="left:1216px;top:305px;width:56px;overflow:hidden;color:#6a6a6a">105.071 mm</div>
<div class="t" style="left:1197px;top:333px;color:#d0d0d0">Y:</div>
<svg style="left:0;top:0" width="1440" height="863"><rect x="1212.5" y="328.5" width="79" height="23" fill="none" stroke="#4a4a4a"/><path d="M1273.5 328 V352" stroke="#4a4a4a"/><path d="M1279 337.0 L1282 334.0 L1285 337.0 M1279 343.0 L1282 346.0 L1285 343.0" fill="none" stroke="#505050" stroke-width="1"/></svg>
<div class="t" style="left:1216px;top:334px;width:56px;overflow:hidden;color:#6a6a6a">148.505 mm</div>
<svg style="left:1212px;top:358px;" width="13" height="13" viewBox="0 0 13 13"><rect x="0.5" y="0.5" width="12" height="12" fill="#2c2c2c" stroke="#4a4a4a" stroke-width="1"/></svg>
<div class="t" style="left:1228px;top:358px;color:#4e4e4e;font-size:11.3px">Relative Center</div>
<div class="t" style="left:1169px;top:389px;color:#d0d0d0;font-size:11px;top:390px">Copies:</div>
<svg style="left:0;top:0" width="1440" height="863"><rect x="1212.5" y="386.5" width="79" height="23" fill="none" stroke="#4a4a4a"/><path d="M1273.5 386 V410" stroke="#4a4a4a"/><path d="M1279 395.0 L1282 392.0 L1285 395.0 M1279 401.0 L1282 404.0 L1285 401.0" fill="none" stroke="#505050" stroke-width="1"/></svg>
<div class="t" style="left:1216px;top:392px;width:56px;overflow:hidden;color:#6a6a6a">1</div>
<svg style="left:0;top:0" width="1440" height="863"><rect x="1131.5" y="429.5" width="284" height="23" fill="none" stroke="#4a4a4a"/></svg>
<div class="t" style="left:1258px;top:434px;color:#595959">Apply</div>
</body></html>
